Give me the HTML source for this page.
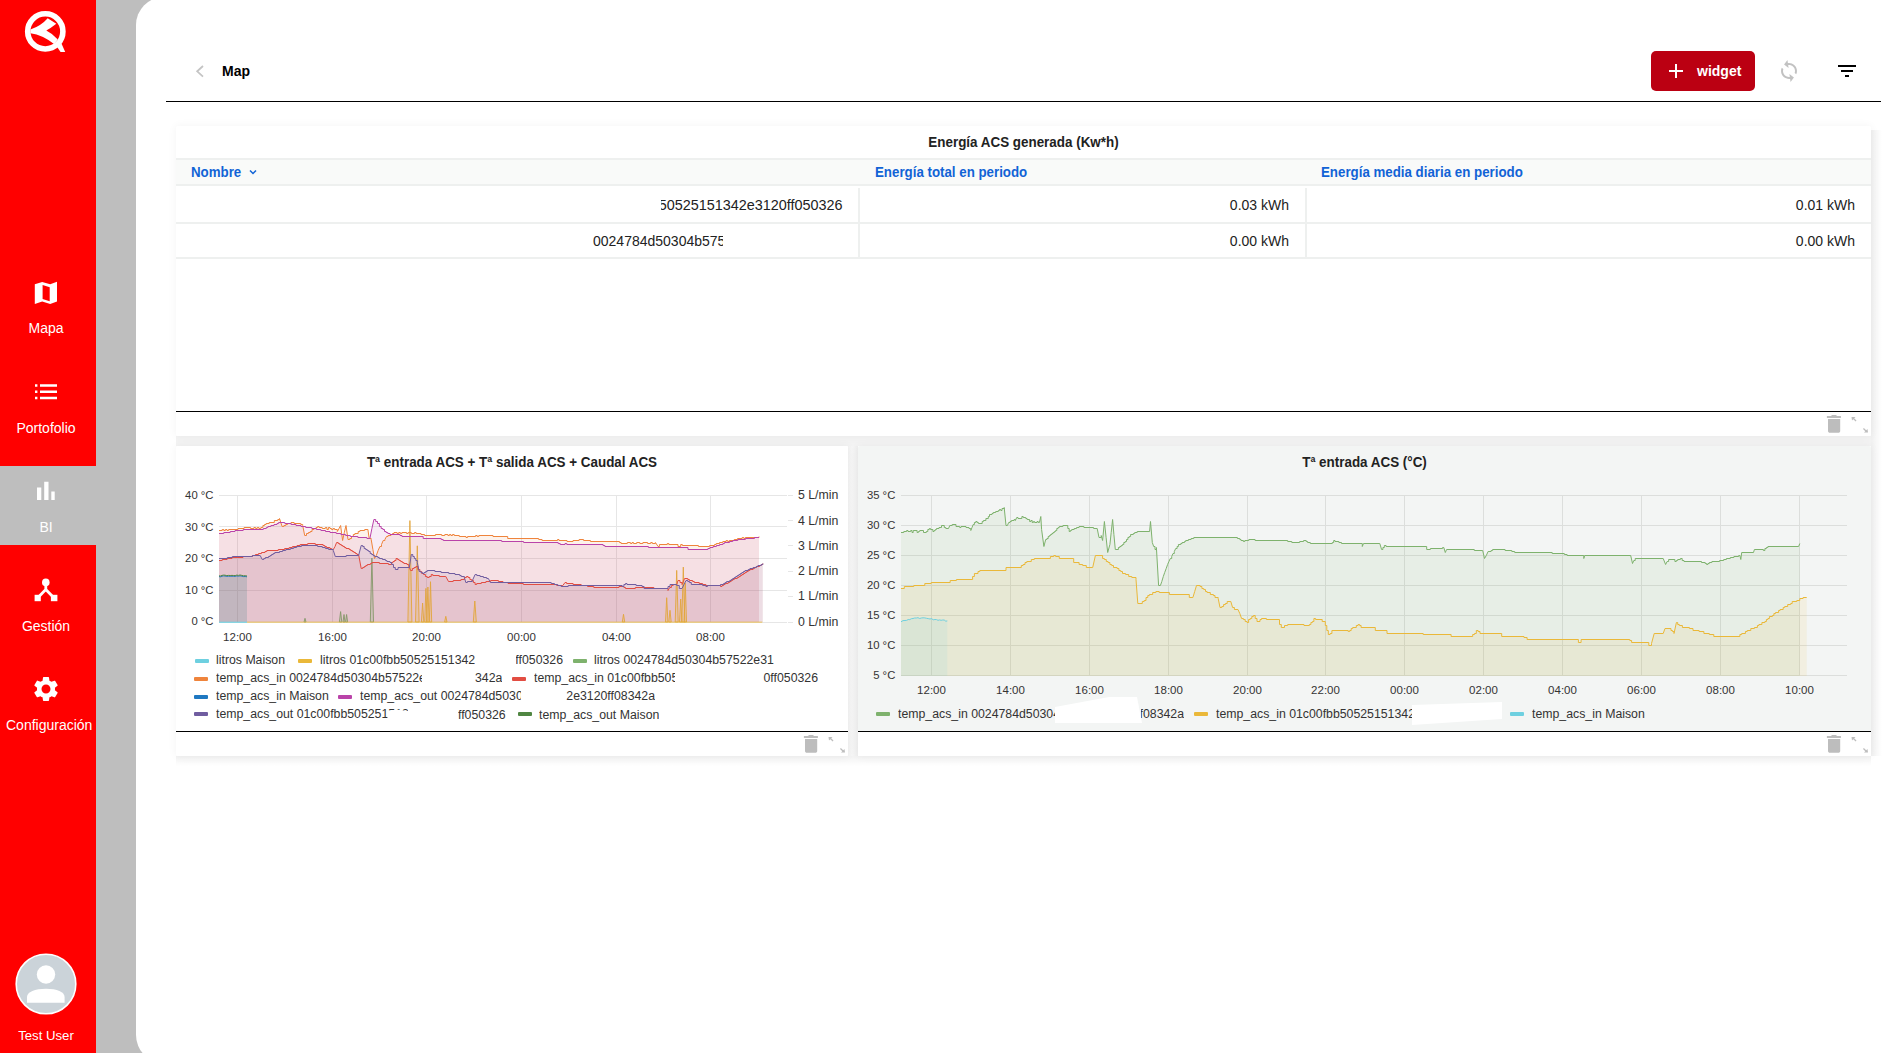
<!DOCTYPE html>
<html><head><meta charset="utf-8">
<style>
*{margin:0;padding:0;box-sizing:border-box}
html,body{width:1897px;height:1053px;overflow:hidden;background:#bebebe;font-family:"Liberation Sans",sans-serif;position:relative}
.abs{position:absolute}
#side{left:0;top:0;width:96px;height:1053px;background:#ff0000}
.nav{position:absolute;left:0;width:96px;color:#fff;font-size:13px;text-align:center}
.nav svg{position:absolute;left:34px;top:0}
.nav span{position:absolute;left:0;width:96px;white-space:nowrap}
#main{left:136px;top:-3px;width:1761px;height:1066px;background:#fff;border-radius:28px 0 0 28px}
.w{position:absolute;background:#fff;box-shadow:0 0 10px rgba(0,0,0,0.05);border-radius:2px}
.t{position:absolute;white-space:nowrap}
.blue{color:#1163d6;font-weight:bold;font-size:14px;transform:scaleX(0.95);transform-origin:0 0}
.cell{font-size:14px;color:#222}
.hl{position:absolute;background:#eef0ef}
.foot{position:absolute;left:0;right:0;height:24px;background:#fff}
.bline{position:absolute;left:0;right:0;height:1px;background:#000}
.ax{font-size:12px;color:#333;position:absolute;white-space:nowrap}
.lg{font-size:12.3px;color:#333;position:absolute;white-space:nowrap;overflow:hidden}
.nvt{left:-2px;width:96px;text-align:center;color:#fff;font-size:14px}
.sw{position:absolute;width:14px;height:4px;border-radius:1px}
</style></head><body>
<div id="side" class="abs">
  <svg class="abs" style="left:15px;top:5px" width="65" height="55" viewBox="0 0 65 55">
    <circle cx="30.3" cy="26.4" r="17.6" fill="none" stroke="#fff" stroke-width="5.6"/>
    <path d="M15.4 24.6 Q26 21 32.7 13.3 L41.3 18.8 Q36 23 31.3 25.6 Q38 29 42.8 34.5 L39 39 Q28 30 15.4 28.2 Z" fill="#fff"/>
    <path d="M41.8 41.5 L46.5 38.5 L50.2 46.9 L45.6 46.9 Z" fill="#fff"/>
  </svg>
  <svg class="abs" style="left:20px;top:275px" width="50" height="40" viewBox="0 0 50 40"><path fill="#fff" fill-rule="evenodd" d="M14.8 9.3 L22.2 7.1 L30.2 9.3 L37 6.8 L37 26.5 L30.2 29 L22.2 26.5 L14.8 29 Z M22.6 10 L29.7 12.3 L29.7 26.2 L22.6 23.9 Z"/></svg>
  <span class="t nvt" style="top:320px">Mapa</span>
  <svg class="abs" style="left:34px;top:383px" width="24" height="18" viewBox="0 0 24 18"><path fill="#fff" d="M1 1.2h2.4v2.6H1zM1 7.4h2.4v2.6H1zM1 13.7h2.4v2.6H1zM6 1.2h17v2.6H6zM6 7.4h17v2.6H6zM6 13.7h17v2.6H6z"/></svg>
  <span class="t nvt" style="top:420px">Portofolio</span>
  <div class="abs" style="left:0;top:466px;width:96px;height:79px;background:#bebebe"></div>
  <svg class="abs" style="left:34px;top:479px" width="24" height="24" viewBox="0 0 24 24"><path fill="#fff" d="M3 8.5h4.3V21H3zM10.2 2.8h4.3V21h-4.3zM17.3 12.5h3.4V21h-3.4z"/></svg>
  <span class="t nvt" style="top:519px">BI</span>
  <svg class="abs" style="left:30px;top:575px" width="32" height="30" viewBox="0 0 32 30"><circle cx="15.8" cy="7.4" r="3.8" fill="#fff"/><path d="M15.8 9 V14.5 L9.5 21 M15.8 14.5 L22.1 21" stroke="#fff" stroke-width="2.8" fill="none"/><rect x="4.6" y="19.8" width="6.2" height="6.4" fill="#fff"/><rect x="20.9" y="19.8" width="6.5" height="6.4" fill="#fff"/></svg>
  <span class="t nvt" style="top:618px">Gestión</span>
  <svg class="abs" style="left:31px;top:674px" width="30" height="30" viewBox="0 0 24 24"><path fill="#fff" d="M19.14 12.94c.04-.3.06-.61.06-.94 0-.32-.02-.64-.07-.94l2.03-1.58c.18-.14.23-.41.12-.61l-1.92-3.32c-.12-.22-.37-.29-.59-.22l-2.39.96c-.5-.38-1.03-.7-1.62-.94l-.36-2.54c-.04-.24-.24-.41-.48-.41h-3.840c-.24 0-.43.17-.47.41l-.36 2.54c-.59.24-1.13.57-1.62.94l-2.39-.96c-.22-.08-.47 0-.59.22L2.74 8.87c-.12.21-.08.47.12.61l2.03 1.58c-.05.3-.09.63-.09.94s.02.64.07.94l-2.03 1.58c-.18.14-.23.41-.12.61l1.92 3.32c.12.22.37.29.59.22l2.39-.96c.5.38 1.03.7 1.62.94l.36 2.54c.05.24.24.41.48.41h3.84c.24 0 .44-.17.47-.41l.36-2.54c.59-.24 1.13-.56 1.62-.94l2.39.96c.22.08.47 0 .59-.22l1.92-3.32c.12-.22.07-.47-.12-.61l-2.01-1.58zM12 15.6c-1.98 0-3.6-1.62-3.6-3.6s1.62-3.6 3.6-3.6 3.6 1.62 3.6 3.6-1.62 3.6-3.6 3.6z"/></svg>
  <span class="t nvt" style="top:717px;left:6px;width:auto;text-align:left">Configuración</span>
  <svg class="abs" style="left:15px;top:953px" width="62" height="62" viewBox="0 0 62 62">
    <circle cx="31" cy="31" r="29.8" fill="#cbd3d9" stroke="#fff" stroke-width="1.6"/>
    <circle cx="31" cy="21.5" r="9.2" fill="#fff"/>
    <path d="M12 49.7 V44 C12 39 20 35.8 31 35.8 C42 35.8 49.6 39 49.6 44 V49.7 Z" fill="#fff"/>
  </svg>
  <span class="t" style="left:-2px;width:96px;text-align:center;top:1028px;color:#fff;font-size:13.2px">Test User</span>
</div>

<div id="main" class="abs"></div>

<!-- header -->
<svg class="abs" style="left:193px;top:62px" width="14" height="18" viewBox="0 0 14 18"><path d="M10 4 L4.2 9.3 L10 14.6" stroke="#c4c4c4" stroke-width="1.8" fill="none"/></svg>
<span class="t" style="left:222px;top:63px;font-size:14px;font-weight:bold;color:#000">Map</span>
<div class="abs" style="left:1651px;top:51px;width:104px;height:40px;background:#bb0012;border-radius:5px"></div>
<svg class="abs" style="left:1667px;top:62px" width="18" height="18" viewBox="0 0 18 18"><path d="M9 2v14M2 9h14" stroke="#fff" stroke-width="2"/></svg>
<span class="t" style="left:1697px;top:63px;font-size:14px;font-weight:bold;color:#fff">widget</span>
<svg class="abs" style="left:1777px;top:59px" width="24" height="24" viewBox="0 0 24 24"><g transform="rotate(-8 12 12)"><path fill="#c2c2c2" d="M12 4V1L8 5l4 4V6c3.31 0 6 2.69 6 6 0 1.01-.25 1.97-.7 2.8l1.46 1.46C19.54 15.03 20 13.57 20 12c0-4.42-3.58-8-8-8zm0 14c-3.31 0-6-2.69-6-6 0-1.01.25-1.97.7-2.8L5.24 7.74C4.46 8.97 4 10.43 4 12c0 4.42 3.58 8 8 8v3l4-4-4-4v3z"/></g></svg>
<svg class="abs" style="left:1835px;top:59px" width="24" height="24" viewBox="0 0 24 24"><path fill="#000" d="M10 18h4v-2h-4v2zM3 6v2h18V6H3zm3 7h12v-2H6v2z" transform="translate(0,0)"/></svg>
<div class="abs" style="left:166px;top:101px;width:1715px;height:1px;background:#000"></div>

<!-- widget grey bands -->
<div class="abs" style="left:176px;top:436px;width:1695px;height:10px;background:#f3f3f3"></div>
<div class="abs" style="left:848px;top:446px;width:10px;height:310px;background:linear-gradient(to right,#f3f3f3,#f6f6f6 40%,#efefef)"></div>
<div class="abs" style="left:1871px;top:130px;width:11px;height:626px;background:linear-gradient(to right,rgba(0,0,0,0.06),rgba(0,0,0,0))"></div>
<div class="abs" style="left:176px;top:756px;width:1695px;height:10px;background:linear-gradient(to bottom,rgba(0,0,0,0.05),rgba(0,0,0,0))"></div>

<!-- TABLE WIDGET -->
<div class="w" style="left:176px;top:126px;width:1695px;height:310px">
  <span class="t" style="left:0;width:1695px;text-align:center;top:7.5px;font-size:14px;font-weight:bold;color:#222;transform:scaleX(0.958)">Energía ACS generada (Kw*h)</span>
  <div class="abs" style="left:0;top:32px;width:1695px;height:28px;background:#f9faf9;border-top:2px solid #eef0ef;border-bottom:2px solid #eef0ef"></div>
  <span class="t blue" style="left:15px;top:38px">Nombre</span>
  <svg class="abs" style="left:72px;top:41px" width="10" height="10" viewBox="0 0 10 10"><path d="M2 3.5 L5 6.5 L8 3.5" stroke="#1163d6" stroke-width="1.5" fill="none"/></svg>
  <span class="t blue" style="left:699px;top:38px">Energía total en periodo</span>
  <span class="t blue" style="left:1145px;top:38px">Energía media diaria en periodo</span>
  <div class="hl" style="left:0;top:96px;width:1695px;height:2px"></div>
  <div class="hl" style="left:0;top:131px;width:1695px;height:2px"></div>
  <div class="hl" style="left:682px;top:62px;width:2px;height:70px"></div>
  <div class="hl" style="left:1129px;top:62px;width:2px;height:70px"></div>
  <div class="t cell" style="left:485px;top:71px;width:181.5px;overflow:hidden;direction:rtl;font-size:14.4px">50525151342e3120ff050326</div>
  <div class="t cell" style="left:417px;top:107px;width:130px;overflow:hidden;text-align:left">0024784d50304b57522e</div>
  <span class="t cell" style="right:582px;top:71px">0.03 kWh</span>
  <span class="t cell" style="right:582px;top:107px">0.00 kWh</span>
  <span class="t cell" style="right:16px;top:71px">0.01 kWh</span>
  <span class="t cell" style="right:16px;top:107px">0.00 kWh</span>
  <div class="bline" style="top:285px"></div>
  <svg class="abs" style="left:1649px;top:288px" width="45" height="20" viewBox="0 0 45 20"><path fill="#bdbdbd" d="M1.9 2h14v1.9h-14zM6.5 1h5v1h-5zM3 5h12.2v12c0 1-.9 1.8-1.8 1.8h-8.6C3.9 18.8 3 18 3 17z"/><path fill="#bdbdbd" d="M26.5 3h4l-1.3 1.3 2.3 2.3-.9.9-2.3-2.3L27 6.5zM43 18.5h-4l1.3-1.3-2.3-2.3.9-.9 2.3 2.3 1.3-1.3z"/></svg>
</div>

<!-- LEFT CHART WIDGET -->
<div class="w" style="left:176px;top:446px;width:672px;height:310px">
  <span class="t" style="left:0;width:672px;text-align:center;top:7.5px;font-size:14px;font-weight:bold;color:#222;transform:scaleX(0.958)">Tª entrada ACS + Tª salida ACS + Caudal ACS</span>
  <div class="bline" style="top:285px"></div>
  <svg class="abs" style="left:626px;top:288px" width="45" height="20" viewBox="0 0 45 20"><path fill="#bdbdbd" d="M1.9 2h14v1.9h-14zM6.5 1h5v1h-5zM3 5h12.2v12c0 1-.9 1.8-1.8 1.8h-8.6C3.9 18.8 3 18 3 17z"/><path fill="#bdbdbd" d="M26.5 3h4l-1.3 1.3 2.3 2.3-.9.9-2.3-2.3L27 6.5zM43 18.5h-4l1.3-1.3-2.3-2.3.9-.9 2.3 2.3 1.3-1.3z"/></svg>
</div>
<!-- RIGHT CHART WIDGET -->
<div class="w" style="left:858px;top:446px;width:1013px;height:310px;background:#f3f5f4">
  <span class="t" style="left:0;width:1013px;text-align:center;top:7.5px;font-size:14px;font-weight:bold;color:#222;transform:scaleX(0.958)">Tª entrada ACS (°C)</span>
  <div class="foot" style="top:286px"></div>
  <div class="bline" style="top:285px"></div>
  <svg class="abs" style="left:967px;top:288px" width="45" height="20" viewBox="0 0 45 20"><path fill="#bdbdbd" d="M1.9 2h14v1.9h-14zM6.5 1h5v1h-5zM3 5h12.2v12c0 1-.9 1.8-1.8 1.8h-8.6C3.9 18.8 3 18 3 17z"/><path fill="#bdbdbd" d="M26.5 3h4l-1.3 1.3 2.3 2.3-.9.9-2.3-2.3L27 6.5zM43 18.5h-4l1.3-1.3-2.3-2.3.9-.9 2.3 2.3 1.3-1.3z"/></svg>
</div>

<!-- legends left -->
<div class="sw" style="left:195px;top:659px;background:#6ED0E0"></div><span class="lg" style="left:216px;top:653px">litros Maison</span>
<div class="sw" style="left:298px;top:659px;background:#EAB839"></div><span class="lg" style="left:320px;top:653px">litros 01c00fbb50525151342</span>
<span class="lg" style="left:516px;top:653px;width:47px;direction:rtl;text-align:left">ff050326</span>
<div class="sw" style="left:573px;top:659px;background:#7EB26D"></div><span class="lg" style="left:594px;top:653px">litros 0024784d50304b57522e31</span>

<div class="sw" style="left:194px;top:677px;background:#EF843C"></div><span class="lg" style="left:216px;top:671px;width:206px">temp_acs_in 0024784d50304b57522e31</span>
<span class="lg" style="left:475px;top:671px">342a</span>
<div class="sw" style="left:512px;top:677px;background:#E24D42"></div><span class="lg" style="left:534px;top:671px;width:141px">temp_acs_in 01c00fbb50525151342</span>
<span class="lg" style="left:763px;top:671px;width:55px;direction:rtl">0ff050326</span>

<div class="sw" style="left:194px;top:695px;background:#1F78C1"></div><span class="lg" style="left:216px;top:689px">temp_acs_in Maison</span>
<div class="sw" style="left:338px;top:695px;background:#BA43A9"></div><span class="lg" style="left:360px;top:689px;width:161px">temp_acs_out 0024784d50304b57</span>
<span class="lg" style="left:565px;top:689px;width:90px;direction:rtl">2e3120ff08342a</span>

<div class="sw" style="left:194px;top:712px;background:#705DA0"></div><span class="lg" style="left:216px;top:707px;width:192px">temp_acs_out 01c00fbb50525151342</span><svg class="abs" style="left:386px;top:705px" width="30" height="22"><path d="M1.5 5.5 L12 4.8 L22 6 L24 20 L1.5 20 Z" fill="#fff"/></svg>
<span class="lg" style="left:458px;top:707.5px">ff050326</span>
<div class="sw" style="left:518px;top:712px;background:#508642"></div><span class="lg" style="left:539px;top:707.5px">temp_acs_out Maison</span>

<!-- legends right -->
<div class="sw" style="left:876px;top:712px;background:#7EB26D"></div><span class="lg" style="left:898px;top:707px;width:157px">temp_acs_in 0024784d50304b57522e</span>
<span class="lg" style="left:1141px;top:707px;width:43px;direction:rtl">f08342a</span>
<svg class="abs" style="left:1050px;top:694px" width="100" height="32"><path d="M5 13 L59 3 L87 3 L92 29 L5 29 Z" fill="#fff"/></svg>
<div class="sw" style="left:1194px;top:712px;background:#EAB839"></div><span class="lg" style="left:1216px;top:707px;width:197px">temp_acs_in 01c00fbb50525151342e</span>
<svg class="abs" style="left:1410px;top:700px" width="95" height="28"><path d="M2 5 L92 2 L92 19 L2 25 Z" fill="#fff"/></svg>
<div class="sw" style="left:1510px;top:712px;background:#6ED0E0"></div><span class="lg" style="left:1532px;top:707px">temp_acs_in Maison</span>

<svg class="abs" style="left:0;top:0;pointer-events:none" width="1897" height="1053" viewBox="0 0 1897 1053">
<g stroke="#e6e6e6" stroke-width="1" shape-rendering="crispEdges">
<line x1="219" y1="495.5" x2="787" y2="495.5"/>
<line x1="219" y1="526.5" x2="787" y2="526.5"/>
<line x1="219" y1="558.5" x2="787" y2="558.5"/>
<line x1="219" y1="590.5" x2="787" y2="590.5"/>
<line x1="219" y1="622.5" x2="787" y2="622.5"/>
<line x1="237.5" y1="495" x2="237.5" y2="622"/>
<line x1="332.5" y1="495" x2="332.5" y2="622"/>
<line x1="426.5" y1="495" x2="426.5" y2="622"/>
<line x1="521.5" y1="495" x2="521.5" y2="622"/>
<line x1="616.5" y1="495" x2="616.5" y2="622"/>
<line x1="710.5" y1="495" x2="710.5" y2="622"/>
<line x1="788" y1="495.5" x2="793" y2="495.5"/>
<line x1="788" y1="520.5" x2="793" y2="520.5"/>
<line x1="788" y1="545.5" x2="793" y2="545.5"/>
<line x1="788" y1="571.5" x2="793" y2="571.5"/>
<line x1="788" y1="596.5" x2="793" y2="596.5"/>
<line x1="788" y1="622.5" x2="793" y2="622.5"/>
</g>
<polygon points="219.0,530.5 222.2,530.5 222.2,529.5 223.8,529.5 223.8,530.5 225.4,530.5 225.4,529.5 227.0,529.5 227.0,530.5 228.6,530.5 228.6,529.5 238.0,529.5 238.0,528.5 244.1,528.5 244.1,527.5 250.6,527.5 250.6,528.5 253.9,528.5 253.9,527.5 255.6,527.5 255.6,528.5 257.2,528.5 257.2,527.5 258.9,527.5 258.9,528.5 260.9,528.5 260.9,527.5 262.9,527.5 262.9,525.5 264.5,525.5 264.5,524.5 266.1,524.5 266.1,523.5 269.2,523.5 269.2,522.5 274.3,522.5 274.3,520.5 277.8,520.5 277.8,519.5 279.5,519.5 279.5,518.5 282.1,526.5 283.9,526.5 283.9,525.5 285.8,525.5 285.8,524.5 287.6,524.5 287.6,523.5 291.0,523.5 291.0,522.5 294.1,522.5 294.1,523.5 300.8,523.5 300.8,524.5 302.7,524.5 302.7,525.5 304.7,535.5 306.5,535.5 306.5,533.5 308.4,533.5 308.4,532.5 310.2,532.5 310.2,531.5 312.0,531.5 312.0,529.5 314.0,529.5 314.0,528.5 316.0,528.5 316.0,527.5 317.6,527.5 317.6,526.5 319.1,526.5 319.1,527.5 322.2,527.5 322.2,528.5 325.3,528.5 325.3,527.5 326.9,527.5 326.9,529.5 328.4,529.5 328.4,527.5 330.0,527.5 330.0,528.5 331.5,528.5 331.5,529.5 333.1,529.5 333.1,528.5 334.6,528.5 334.6,529.5 337.3,529.5 337.3,531.5 339.0,528.5 340.6,525.5 342.6,540.5 344.3,532.5 346.0,525.5 348.0,539.5 349.8,539.5 349.8,538.5 351.5,538.5 351.5,536.5 353.3,536.5 353.3,534.5 354.9,534.5 354.9,533.5 358.2,533.5 358.2,531.5 359.9,531.5 359.9,530.5 364.7,530.5 364.7,529.5 367.9,529.5 369.2,538.5 371.2,538.5 371.2,539.5 372.9,549.5 374.5,558.5 376.3,555.5 378.1,550.5 379.9,546.5 381.5,546.5 381.5,544.5 383.2,540.5 384.9,540.5 384.9,539.5 386.5,536.5 388.0,536.5 388.0,535.5 391.0,535.5 391.0,534.5 392.5,534.5 392.5,533.5 394.0,533.5 394.0,532.5 397.1,532.5 397.1,533.5 398.7,533.5 398.7,532.5 400.3,532.5 400.3,533.5 401.9,533.5 401.9,532.5 406.6,532.5 406.6,533.5 408.2,533.5 408.2,532.5 411.3,532.5 411.3,533.5 414.5,533.5 414.5,532.5 416.1,532.5 416.1,533.5 421.0,533.5 421.0,534.5 424.6,534.5 424.6,535.5 435.4,535.5 435.4,534.5 441.7,534.5 441.7,535.5 444.8,535.5 444.8,534.5 447.9,534.5 447.9,535.5 449.4,535.5 449.4,534.5 450.9,534.5 450.9,535.5 452.5,535.5 452.5,534.5 454.2,534.5 454.2,535.5 459.3,535.5 459.3,536.5 466.0,536.5 466.0,537.5 467.6,537.5 467.6,536.5 475.6,536.5 475.6,535.5 477.2,535.5 477.2,536.5 478.8,536.5 478.8,535.5 493.0,535.5 493.0,536.5 507.7,536.5 507.7,538.5 538.7,538.5 538.7,539.5 542.1,539.5 542.1,540.5 557.5,540.5 557.5,539.5 559.0,539.5 559.0,540.5 567.0,540.5 567.0,541.5 573.0,541.5 573.0,540.5 579.1,540.5 579.1,539.5 583.6,539.5 583.6,540.5 590.4,540.5 590.4,541.5 619.5,541.5 619.5,542.5 621.1,542.5 621.1,543.5 627.3,543.5 627.3,542.5 630.4,542.5 630.4,543.5 632.0,543.5 632.0,542.5 633.5,542.5 633.5,543.5 636.7,543.5 636.7,542.5 639.8,542.5 639.8,543.5 642.9,543.5 642.9,542.5 647.6,542.5 647.6,543.5 650.7,543.5 650.7,542.5 652.3,542.5 652.3,543.5 655.4,543.5 655.4,542.5 658.1,546.5 659.4,546.5 659.4,544.5 667.3,544.5 667.3,543.5 668.8,543.5 668.8,544.5 678.0,544.5 678.0,546.5 680.7,546.5 680.7,544.5 682.3,544.5 682.3,545.5 698.4,545.5 698.4,546.5 709.6,546.5 709.6,545.5 714.5,545.5 714.5,544.5 716.2,544.5 716.2,543.5 719.5,543.5 719.5,542.5 722.8,542.5 722.8,541.5 726.1,541.5 726.1,540.5 727.7,540.5 727.7,541.5 729.3,541.5 729.3,540.5 734.2,540.5 734.2,539.5 737.5,539.5 737.5,538.5 742.2,538.5 742.2,537.5 743.8,537.5 743.8,538.5 745.3,538.5 745.3,537.5 759.0,537.5 759.0,536.5 759.0,622 219.0,622" fill="#EF843C" fill-opacity="0.1"/>
<polygon points="219.0,560.5 222.2,560.5 222.2,559.5 227.1,559.5 227.1,558.5 232.0,558.5 232.0,557.5 243.0,557.5 243.0,556.5 252.4,556.5 252.4,555.5 255.4,555.5 255.4,554.5 258.5,554.5 258.5,553.5 261.5,553.5 261.5,552.5 265.0,552.5 265.0,551.5 266.8,551.5 266.8,550.5 278.2,550.5 278.2,549.5 284.6,549.5 284.6,548.5 289.2,548.5 289.2,547.5 292.4,547.5 292.4,546.5 297.0,546.5 297.0,545.5 300.1,545.5 300.1,544.5 307.7,544.5 307.7,543.5 315.3,543.5 315.3,544.5 323.1,544.5 323.1,545.5 324.8,545.5 324.8,546.5 326.5,546.5 326.5,547.5 329.9,547.5 329.9,548.5 331.6,548.5 331.6,549.5 333.3,549.5 335.0,546.5 336.6,542.5 338.2,542.5 338.2,543.5 339.7,543.5 339.7,544.5 341.3,544.5 341.3,545.5 342.9,545.5 342.9,546.5 344.5,546.5 344.5,547.5 346.0,547.5 346.0,548.5 349.2,548.5 349.2,549.5 350.7,549.5 350.7,550.5 352.3,550.5 352.3,551.5 353.9,551.5 353.9,552.5 355.5,552.5 355.5,553.5 357.0,553.5 357.0,554.5 358.6,554.5 361.2,568.5 362.7,568.5 362.7,567.5 364.3,567.5 364.3,566.5 365.8,566.5 365.8,565.5 367.3,565.5 367.3,564.5 370.4,564.5 370.4,563.5 371.9,563.5 371.9,562.5 379.4,562.5 379.4,563.5 388.5,563.5 388.5,564.5 391.5,564.5 391.5,562.5 393.0,562.5 393.0,561.5 394.5,561.5 394.5,560.5 396.0,560.5 396.0,558.5 397.6,558.5 397.6,559.5 399.1,559.5 399.1,560.5 400.7,560.5 400.7,561.5 402.3,561.5 402.3,562.5 403.9,562.5 403.9,563.5 407.0,563.5 407.0,564.5 408.6,564.5 408.6,565.5 410.6,570.5 412.4,570.5 412.4,568.5 414.1,568.5 414.1,567.5 415.9,567.5 415.9,566.5 417.9,566.5 417.9,569.5 419.9,569.5 419.9,571.5 421.7,571.5 421.7,573.5 423.5,573.5 423.5,574.5 425.4,574.5 425.4,576.5 427.2,576.5 427.2,577.5 429.2,577.5 429.2,576.5 431.2,576.5 431.2,574.5 432.8,574.5 432.8,575.5 439.3,575.5 439.3,576.5 445.8,576.5 448.5,581.5 453.2,581.5 453.2,580.5 460.9,580.5 460.9,579.5 464.4,579.5 464.4,577.5 466.4,577.5 466.4,576.5 468.1,576.5 468.1,577.5 469.9,577.5 469.9,579.5 471.6,579.5 471.6,580.5 473.4,580.5 473.4,582.5 475.1,582.5 475.1,584.5 476.7,584.5 476.7,583.5 481.3,583.5 481.3,582.5 485.9,582.5 485.9,581.5 490.6,581.5 490.6,580.5 498.4,580.5 498.4,581.5 503.0,581.5 503.0,582.5 508.0,582.5 508.0,583.5 523.3,583.5 523.3,584.5 556.7,584.5 556.7,585.5 562.8,585.5 565.0,582.5 566.6,582.5 566.6,583.5 573.1,583.5 573.1,584.5 581.2,584.5 581.2,585.5 587.5,585.5 587.5,586.5 593.8,586.5 593.8,587.5 619.0,587.5 619.0,586.5 623.9,586.5 623.9,587.5 625.5,587.5 625.5,588.5 635.3,588.5 635.3,587.5 653.9,587.5 653.9,588.5 668.0,588.5 668.0,590.5 669.7,587.5 671.4,587.5 671.4,585.5 673.2,585.5 673.2,584.5 676.7,584.5 678.0,580.5 680.0,580.5 680.0,582.5 682.0,582.5 682.0,584.5 684.6,578.5 687.8,578.5 687.8,579.5 689.4,579.5 689.4,580.5 692.6,580.5 692.6,581.5 694.3,581.5 694.3,582.5 699.2,582.5 699.2,583.5 702.6,583.5 702.6,584.5 705.9,584.5 705.9,585.5 720.5,585.5 720.5,586.5 722.0,586.5 722.0,585.5 723.6,585.5 723.6,584.5 725.1,584.5 725.1,583.5 728.1,583.5 728.1,582.5 729.7,582.5 729.7,581.5 731.2,581.5 731.2,580.5 732.7,580.5 732.7,579.5 734.3,579.5 734.3,578.5 737.3,578.5 737.3,577.5 738.9,577.5 738.9,576.5 740.4,576.5 740.4,575.5 741.9,575.5 741.9,574.5 743.5,574.5 743.5,573.5 745.0,573.5 745.0,572.5 746.6,572.5 746.6,571.5 748.2,571.5 748.2,570.5 749.9,570.5 749.9,569.5 753.1,569.5 753.1,568.5 754.7,568.5 754.7,567.5 756.3,567.5 756.3,566.5 759.6,566.5 759.6,565.5 761.2,565.5 761.2,564.5 762.8,564.5 762.8,563.5 762.8,622 219.0,622" fill="#E24D42" fill-opacity="0.1"/>
<polygon points="219.0,533.5 223.8,533.5 223.8,532.5 230.2,532.5 230.2,531.5 235.0,531.5 235.0,530.5 243.2,530.5 243.2,529.5 263.3,529.5 263.3,528.5 266.3,528.5 266.3,527.5 267.9,527.5 267.9,526.5 270.9,526.5 270.9,525.5 274.0,525.5 274.0,524.5 277.0,524.5 277.0,523.5 278.6,523.5 278.6,522.5 284.8,522.5 284.8,523.5 291.1,523.5 291.1,524.5 296.0,524.5 296.0,525.5 301.0,525.5 301.0,526.5 305.7,526.5 305.7,527.5 311.8,527.5 311.8,528.5 316.4,528.5 316.4,529.5 320.9,529.5 320.9,530.5 325.5,530.5 325.5,531.5 330.0,531.5 330.0,532.5 336.2,532.5 336.2,533.5 340.9,533.5 340.9,534.5 345.6,534.5 345.6,535.5 350.3,535.5 350.3,536.5 357.9,536.5 357.9,537.5 366.9,537.5 366.9,538.5 369.9,538.5 371.9,528.5 373.9,519.5 375.7,519.5 375.7,521.5 377.5,521.5 377.5,523.5 379.4,523.5 379.4,526.5 381.2,526.5 381.2,528.5 382.9,528.5 382.9,529.5 384.5,529.5 384.5,531.5 386.1,531.5 386.1,532.5 387.8,532.5 387.8,533.5 390.0,533.5 390.0,534.5 400.0,534.5 400.0,535.5 402.0,535.5 402.0,536.5 423.2,536.5 423.2,538.5 441.2,538.5 441.2,539.5 443.2,539.5 443.2,540.5 501.7,540.5 501.7,541.5 523.6,541.5 523.6,542.5 558.2,542.5 558.2,543.5 560.2,543.5 560.2,544.5 565.0,544.5 565.0,543.5 566.8,543.5 566.8,544.5 603.1,544.5 603.1,545.5 604.9,545.5 604.9,546.5 648.4,546.5 648.4,547.5 688.0,547.5 688.0,549.5 707.9,549.5 707.9,548.5 709.9,548.5 709.9,547.5 713.1,547.5 713.1,546.5 716.4,546.5 716.4,545.5 719.6,545.5 719.6,544.5 722.9,544.5 722.9,543.5 724.5,543.5 724.5,542.5 729.5,542.5 729.5,541.5 732.8,541.5 732.8,540.5 737.8,540.5 737.8,539.5 745.4,539.5 745.4,538.5 754.5,538.5 754.5,537.5 759.0,537.5 759.0,622 219.0,622" fill="#BA43A9" fill-opacity="0.1"/>
<polygon points="219.0,558.5 227.3,558.5 227.3,557.5 232.3,557.5 232.3,556.5 252.4,556.5 252.4,555.5 260.2,555.5 262.2,559.5 263.8,559.5 263.8,558.5 265.4,558.5 265.4,557.5 268.5,557.5 268.5,556.5 270.1,556.5 270.1,555.5 271.6,555.5 271.6,554.5 273.2,554.5 273.2,553.5 274.8,553.5 274.8,552.5 279.5,552.5 279.5,551.5 282.6,551.5 282.6,550.5 285.8,550.5 285.8,549.5 290.4,549.5 290.4,548.5 293.6,548.5 293.6,547.5 296.7,547.5 296.7,546.5 301.4,546.5 301.4,545.5 317.6,545.5 317.6,546.5 322.3,546.5 322.3,547.5 325.4,547.5 325.4,548.5 328.6,548.5 328.6,549.5 333.3,549.5 333.3,550.5 335.3,556.5 346.2,556.5 346.2,555.5 358.6,555.5 361.2,545.5 362.7,545.5 362.7,546.5 364.2,546.5 364.2,548.5 365.7,548.5 365.7,549.5 367.2,549.5 367.2,550.5 368.7,550.5 368.7,551.5 370.2,551.5 370.2,553.5 371.7,553.5 371.7,554.5 373.2,554.5 373.2,555.5 374.7,555.5 374.7,556.5 377.8,556.5 377.8,557.5 379.3,557.5 379.3,558.5 382.4,558.5 382.4,559.5 385.4,559.5 385.4,560.5 386.9,560.5 386.9,561.5 390.0,561.5 390.0,562.5 391.8,562.5 391.8,564.5 393.5,564.5 393.5,567.5 395.3,567.5 395.3,569.5 398.0,569.5 398.0,567.5 409.3,567.5 411.3,554.5 412.8,554.5 412.8,556.5 414.3,556.5 414.3,558.5 415.8,558.5 415.8,560.5 417.3,560.5 417.3,562.5 419.2,571.5 420.9,571.5 420.9,572.5 422.6,572.5 422.6,573.5 424.1,573.5 424.1,572.5 425.7,572.5 425.7,571.5 427.2,571.5 427.2,570.5 434.9,570.5 434.9,571.5 441.1,571.5 441.1,572.5 448.8,572.5 448.8,573.5 455.0,573.5 455.0,574.5 459.7,574.5 459.7,575.5 461.2,575.5 461.2,576.5 464.4,576.5 464.4,577.5 465.8,582.5 467.4,582.5 467.4,581.5 472.4,581.5 472.4,580.5 475.1,574.5 476.8,574.5 476.8,575.5 480.1,575.5 480.1,576.5 483.4,576.5 483.4,577.5 486.7,577.5 486.7,578.5 488.4,578.5 490.4,582.5 551.2,582.5 551.2,583.5 554.5,583.5 554.5,584.5 557.8,584.5 557.8,585.5 561.1,585.5 561.1,586.5 568.2,586.5 568.2,585.5 622.2,585.5 622.2,586.5 623.9,586.5 623.9,584.5 625.5,584.5 625.5,583.5 627.0,583.5 627.0,584.5 636.1,584.5 636.1,585.5 642.1,585.5 642.1,586.5 644.1,586.5 644.1,588.5 668.0,588.5 668.0,586.5 670.0,586.5 670.0,584.5 676.7,584.5 676.7,585.5 679.3,585.5 679.3,588.5 682.0,588.5 684.0,584.5 686.0,580.5 687.8,580.5 687.8,581.5 689.5,581.5 689.5,582.5 691.3,582.5 691.3,584.5 702.6,584.5 702.6,585.5 705.9,585.5 705.9,586.5 707.5,586.5 707.5,585.5 720.5,585.5 720.5,584.5 723.6,584.5 723.6,583.5 725.1,583.5 725.1,582.5 726.6,582.5 726.6,581.5 729.7,581.5 729.7,580.5 731.2,580.5 731.2,579.5 732.7,579.5 732.7,578.5 734.3,578.5 734.3,577.5 735.8,577.5 735.8,576.5 737.3,576.5 737.3,575.5 738.9,575.5 738.9,574.5 740.4,574.5 740.4,573.5 741.9,573.5 741.9,572.5 743.5,572.5 743.5,571.5 745.0,571.5 745.0,570.5 748.2,570.5 748.2,569.5 749.9,569.5 749.9,568.5 753.1,568.5 753.1,567.5 756.3,567.5 756.3,566.5 757.9,566.5 757.9,565.5 761.2,565.5 761.2,564.5 762.8,564.5 762.8,563.5 762.8,622 219.0,622" fill="#705DA0" fill-opacity="0.1"/>
<polygon points="219.0,576.6 220.5,576.8 222.0,576.2 223.5,575.9 225.0,576.0 226.8,576.4 228.5,576.2 230.2,576.3 232.0,576.2 233.6,576.3 235.2,576.4 236.8,575.9 238.4,576.2 240.0,575.8 241.8,576.2 243.5,576.6 245.2,576.5 247.0,576.8 247.0,622 219.0,622" fill="#1F78C1" fill-opacity="0.1"/>
<polygon points="219.0,576.6 220.5,576.8 222.0,576.2 223.5,575.9 225.0,576.0 226.8,576.4 228.5,576.2 230.2,576.3 232.0,576.2 233.6,576.3 235.2,576.4 236.8,575.9 238.4,576.2 240.0,575.8 241.8,576.2 243.5,576.6 245.2,576.5 247.0,576.8 247.0,622 219.0,622" fill="#508642" fill-opacity="0.1"/>
<polygon points="407.9,622.0 409.9,520.6 411.9,622.0" fill="#EAB839" fill-opacity="0.2" stroke="#e2a53c" stroke-width="0.9" stroke-linejoin="miter" stroke-miterlimit="20"/>
<polygon points="415.5,622.0 417.3,545.8 419.1,622.0" fill="#EAB839" fill-opacity="0.2" stroke="#e2a53c" stroke-width="0.9" stroke-linejoin="miter" stroke-miterlimit="20"/>
<polygon points="421.4,622.0 422.6,603.0 423.8,622.0" fill="#EAB839" fill-opacity="0.2" stroke="#e2a53c" stroke-width="0.9" stroke-linejoin="miter" stroke-miterlimit="20"/>
<polygon points="424.7,622.0 425.9,588.4 427.1,622.0" fill="#EAB839" fill-opacity="0.2" stroke="#e2a53c" stroke-width="0.9" stroke-linejoin="miter" stroke-miterlimit="20"/>
<polygon points="426.7,622.0 427.9,587.0 429.1,622.0" fill="#EAB839" fill-opacity="0.2" stroke="#e2a53c" stroke-width="0.9" stroke-linejoin="miter" stroke-miterlimit="20"/>
<polygon points="429.3,622.0 430.5,581.7 431.7,622.0" fill="#EAB839" fill-opacity="0.2" stroke="#e2a53c" stroke-width="0.9" stroke-linejoin="miter" stroke-miterlimit="20"/>
<polygon points="444.6,622.0 445.8,616.3 447.0,622.0" fill="#EAB839" fill-opacity="0.2" stroke="#e2a53c" stroke-width="0.9" stroke-linejoin="miter" stroke-miterlimit="20"/>
<polygon points="473.3,622.0 474.8,601.0 476.3,622.0" fill="#EAB839" fill-opacity="0.2" stroke="#e2a53c" stroke-width="0.9" stroke-linejoin="miter" stroke-miterlimit="20"/>
<polygon points="622.3,622.0 623.5,614.3 624.7,622.0" fill="#EAB839" fill-opacity="0.2" stroke="#e2a53c" stroke-width="0.9" stroke-linejoin="miter" stroke-miterlimit="20"/>
<polygon points="665.5,622.0 666.7,597.7 667.9,622.0" fill="#EAB839" fill-opacity="0.2" stroke="#e2a53c" stroke-width="0.9" stroke-linejoin="miter" stroke-miterlimit="20"/>
<polygon points="668.8,622.0 670.0,610.3 671.2,622.0" fill="#EAB839" fill-opacity="0.2" stroke="#e2a53c" stroke-width="0.9" stroke-linejoin="miter" stroke-miterlimit="20"/>
<polygon points="675.2,622.0 676.7,570.4 678.2,622.0" fill="#EAB839" fill-opacity="0.2" stroke="#e2a53c" stroke-width="0.9" stroke-linejoin="miter" stroke-miterlimit="20"/>
<polygon points="679.5,622.0 680.7,599.0 681.9,622.0" fill="#EAB839" fill-opacity="0.2" stroke="#e2a53c" stroke-width="0.9" stroke-linejoin="miter" stroke-miterlimit="20"/>
<polygon points="681.8,622.0 683.3,567.1 684.8,622.0" fill="#EAB839" fill-opacity="0.2" stroke="#e2a53c" stroke-width="0.9" stroke-linejoin="miter" stroke-miterlimit="20"/>
<polygon points="684.1,622.0 685.3,583.0 686.5,622.0" fill="#EAB839" fill-opacity="0.2" stroke="#e2a53c" stroke-width="0.9" stroke-linejoin="miter" stroke-miterlimit="20"/>
<polygon points="304.0,622.0 305.0,618.3 306.0,622.0" fill="#7EB26D" fill-opacity="0.2" stroke="#86976a" stroke-width="0.9" stroke-linejoin="miter" stroke-miterlimit="20"/>
<polygon points="339.4,622.0 340.6,611.6 341.8,622.0" fill="#7EB26D" fill-opacity="0.2" stroke="#86976a" stroke-width="0.9" stroke-linejoin="miter" stroke-miterlimit="20"/>
<polygon points="343.0,622.0 344.0,614.5 345.0,622.0" fill="#7EB26D" fill-opacity="0.2" stroke="#86976a" stroke-width="0.9" stroke-linejoin="miter" stroke-miterlimit="20"/>
<polygon points="345.6,622.0 346.6,614.5 347.6,622.0" fill="#7EB26D" fill-opacity="0.2" stroke="#86976a" stroke-width="0.9" stroke-linejoin="miter" stroke-miterlimit="20"/>
<polygon points="370.3,622.0 371.9,558.0 373.5,622.0" fill="#7EB26D" fill-opacity="0.2" stroke="#86976a" stroke-width="0.9" stroke-linejoin="miter" stroke-miterlimit="20"/>
<polyline points="219.0,530.5 222.2,530.5 222.2,529.5 223.8,529.5 223.8,530.5 225.4,530.5 225.4,529.5 227.0,529.5 227.0,530.5 228.6,530.5 228.6,529.5 238.0,529.5 238.0,528.5 244.1,528.5 244.1,527.5 250.6,527.5 250.6,528.5 253.9,528.5 253.9,527.5 255.6,527.5 255.6,528.5 257.2,528.5 257.2,527.5 258.9,527.5 258.9,528.5 260.9,528.5 260.9,527.5 262.9,527.5 262.9,525.5 264.5,525.5 264.5,524.5 266.1,524.5 266.1,523.5 269.2,523.5 269.2,522.5 274.3,522.5 274.3,520.5 277.8,520.5 277.8,519.5 279.5,519.5 279.5,518.5 282.1,526.5 283.9,526.5 283.9,525.5 285.8,525.5 285.8,524.5 287.6,524.5 287.6,523.5 291.0,523.5 291.0,522.5 294.1,522.5 294.1,523.5 300.8,523.5 300.8,524.5 302.7,524.5 302.7,525.5 304.7,535.5 306.5,535.5 306.5,533.5 308.4,533.5 308.4,532.5 310.2,532.5 310.2,531.5 312.0,531.5 312.0,529.5 314.0,529.5 314.0,528.5 316.0,528.5 316.0,527.5 317.6,527.5 317.6,526.5 319.1,526.5 319.1,527.5 322.2,527.5 322.2,528.5 325.3,528.5 325.3,527.5 326.9,527.5 326.9,529.5 328.4,529.5 328.4,527.5 330.0,527.5 330.0,528.5 331.5,528.5 331.5,529.5 333.1,529.5 333.1,528.5 334.6,528.5 334.6,529.5 337.3,529.5 337.3,531.5 339.0,528.5 340.6,525.5 342.6,540.5 344.3,532.5 346.0,525.5 348.0,539.5 349.8,539.5 349.8,538.5 351.5,538.5 351.5,536.5 353.3,536.5 353.3,534.5 354.9,534.5 354.9,533.5 358.2,533.5 358.2,531.5 359.9,531.5 359.9,530.5 364.7,530.5 364.7,529.5 367.9,529.5 369.2,538.5 371.2,538.5 371.2,539.5 372.9,549.5 374.5,558.5 376.3,555.5 378.1,550.5 379.9,546.5 381.5,546.5 381.5,544.5 383.2,540.5 384.9,540.5 384.9,539.5 386.5,536.5 388.0,536.5 388.0,535.5 391.0,535.5 391.0,534.5 392.5,534.5 392.5,533.5 394.0,533.5 394.0,532.5 397.1,532.5 397.1,533.5 398.7,533.5 398.7,532.5 400.3,532.5 400.3,533.5 401.9,533.5 401.9,532.5 406.6,532.5 406.6,533.5 408.2,533.5 408.2,532.5 411.3,532.5 411.3,533.5 414.5,533.5 414.5,532.5 416.1,532.5 416.1,533.5 421.0,533.5 421.0,534.5 424.6,534.5 424.6,535.5 435.4,535.5 435.4,534.5 441.7,534.5 441.7,535.5 444.8,535.5 444.8,534.5 447.9,534.5 447.9,535.5 449.4,535.5 449.4,534.5 450.9,534.5 450.9,535.5 452.5,535.5 452.5,534.5 454.2,534.5 454.2,535.5 459.3,535.5 459.3,536.5 466.0,536.5 466.0,537.5 467.6,537.5 467.6,536.5 475.6,536.5 475.6,535.5 477.2,535.5 477.2,536.5 478.8,536.5 478.8,535.5 493.0,535.5 493.0,536.5 507.7,536.5 507.7,538.5 538.7,538.5 538.7,539.5 542.1,539.5 542.1,540.5 557.5,540.5 557.5,539.5 559.0,539.5 559.0,540.5 567.0,540.5 567.0,541.5 573.0,541.5 573.0,540.5 579.1,540.5 579.1,539.5 583.6,539.5 583.6,540.5 590.4,540.5 590.4,541.5 619.5,541.5 619.5,542.5 621.1,542.5 621.1,543.5 627.3,543.5 627.3,542.5 630.4,542.5 630.4,543.5 632.0,543.5 632.0,542.5 633.5,542.5 633.5,543.5 636.7,543.5 636.7,542.5 639.8,542.5 639.8,543.5 642.9,543.5 642.9,542.5 647.6,542.5 647.6,543.5 650.7,543.5 650.7,542.5 652.3,542.5 652.3,543.5 655.4,543.5 655.4,542.5 658.1,546.5 659.4,546.5 659.4,544.5 667.3,544.5 667.3,543.5 668.8,543.5 668.8,544.5 678.0,544.5 678.0,546.5 680.7,546.5 680.7,544.5 682.3,544.5 682.3,545.5 698.4,545.5 698.4,546.5 709.6,546.5 709.6,545.5 714.5,545.5 714.5,544.5 716.2,544.5 716.2,543.5 719.5,543.5 719.5,542.5 722.8,542.5 722.8,541.5 726.1,541.5 726.1,540.5 727.7,540.5 727.7,541.5 729.3,541.5 729.3,540.5 734.2,540.5 734.2,539.5 737.5,539.5 737.5,538.5 742.2,538.5 742.2,537.5 743.8,537.5 743.8,538.5 745.3,538.5 745.3,537.5 759.0,537.5 759.0,536.5" fill="none" stroke="#EF843C" stroke-width="1" stroke-linejoin="round"/>
<polyline points="219.0,560.5 222.2,560.5 222.2,559.5 227.1,559.5 227.1,558.5 232.0,558.5 232.0,557.5 243.0,557.5 243.0,556.5 252.4,556.5 252.4,555.5 255.4,555.5 255.4,554.5 258.5,554.5 258.5,553.5 261.5,553.5 261.5,552.5 265.0,552.5 265.0,551.5 266.8,551.5 266.8,550.5 278.2,550.5 278.2,549.5 284.6,549.5 284.6,548.5 289.2,548.5 289.2,547.5 292.4,547.5 292.4,546.5 297.0,546.5 297.0,545.5 300.1,545.5 300.1,544.5 307.7,544.5 307.7,543.5 315.3,543.5 315.3,544.5 323.1,544.5 323.1,545.5 324.8,545.5 324.8,546.5 326.5,546.5 326.5,547.5 329.9,547.5 329.9,548.5 331.6,548.5 331.6,549.5 333.3,549.5 335.0,546.5 336.6,542.5 338.2,542.5 338.2,543.5 339.7,543.5 339.7,544.5 341.3,544.5 341.3,545.5 342.9,545.5 342.9,546.5 344.5,546.5 344.5,547.5 346.0,547.5 346.0,548.5 349.2,548.5 349.2,549.5 350.7,549.5 350.7,550.5 352.3,550.5 352.3,551.5 353.9,551.5 353.9,552.5 355.5,552.5 355.5,553.5 357.0,553.5 357.0,554.5 358.6,554.5 361.2,568.5 362.7,568.5 362.7,567.5 364.3,567.5 364.3,566.5 365.8,566.5 365.8,565.5 367.3,565.5 367.3,564.5 370.4,564.5 370.4,563.5 371.9,563.5 371.9,562.5 379.4,562.5 379.4,563.5 388.5,563.5 388.5,564.5 391.5,564.5 391.5,562.5 393.0,562.5 393.0,561.5 394.5,561.5 394.5,560.5 396.0,560.5 396.0,558.5 397.6,558.5 397.6,559.5 399.1,559.5 399.1,560.5 400.7,560.5 400.7,561.5 402.3,561.5 402.3,562.5 403.9,562.5 403.9,563.5 407.0,563.5 407.0,564.5 408.6,564.5 408.6,565.5 410.6,570.5 412.4,570.5 412.4,568.5 414.1,568.5 414.1,567.5 415.9,567.5 415.9,566.5 417.9,566.5 417.9,569.5 419.9,569.5 419.9,571.5 421.7,571.5 421.7,573.5 423.5,573.5 423.5,574.5 425.4,574.5 425.4,576.5 427.2,576.5 427.2,577.5 429.2,577.5 429.2,576.5 431.2,576.5 431.2,574.5 432.8,574.5 432.8,575.5 439.3,575.5 439.3,576.5 445.8,576.5 448.5,581.5 453.2,581.5 453.2,580.5 460.9,580.5 460.9,579.5 464.4,579.5 464.4,577.5 466.4,577.5 466.4,576.5 468.1,576.5 468.1,577.5 469.9,577.5 469.9,579.5 471.6,579.5 471.6,580.5 473.4,580.5 473.4,582.5 475.1,582.5 475.1,584.5 476.7,584.5 476.7,583.5 481.3,583.5 481.3,582.5 485.9,582.5 485.9,581.5 490.6,581.5 490.6,580.5 498.4,580.5 498.4,581.5 503.0,581.5 503.0,582.5 508.0,582.5 508.0,583.5 523.3,583.5 523.3,584.5 556.7,584.5 556.7,585.5 562.8,585.5 565.0,582.5 566.6,582.5 566.6,583.5 573.1,583.5 573.1,584.5 581.2,584.5 581.2,585.5 587.5,585.5 587.5,586.5 593.8,586.5 593.8,587.5 619.0,587.5 619.0,586.5 623.9,586.5 623.9,587.5 625.5,587.5 625.5,588.5 635.3,588.5 635.3,587.5 653.9,587.5 653.9,588.5 668.0,588.5 668.0,590.5 669.7,587.5 671.4,587.5 671.4,585.5 673.2,585.5 673.2,584.5 676.7,584.5 678.0,580.5 680.0,580.5 680.0,582.5 682.0,582.5 682.0,584.5 684.6,578.5 687.8,578.5 687.8,579.5 689.4,579.5 689.4,580.5 692.6,580.5 692.6,581.5 694.3,581.5 694.3,582.5 699.2,582.5 699.2,583.5 702.6,583.5 702.6,584.5 705.9,584.5 705.9,585.5 720.5,585.5 720.5,586.5 722.0,586.5 722.0,585.5 723.6,585.5 723.6,584.5 725.1,584.5 725.1,583.5 728.1,583.5 728.1,582.5 729.7,582.5 729.7,581.5 731.2,581.5 731.2,580.5 732.7,580.5 732.7,579.5 734.3,579.5 734.3,578.5 737.3,578.5 737.3,577.5 738.9,577.5 738.9,576.5 740.4,576.5 740.4,575.5 741.9,575.5 741.9,574.5 743.5,574.5 743.5,573.5 745.0,573.5 745.0,572.5 746.6,572.5 746.6,571.5 748.2,571.5 748.2,570.5 749.9,570.5 749.9,569.5 753.1,569.5 753.1,568.5 754.7,568.5 754.7,567.5 756.3,567.5 756.3,566.5 759.6,566.5 759.6,565.5 761.2,565.5 761.2,564.5 762.8,564.5 762.8,563.5" fill="none" stroke="#E24D42" stroke-width="1" stroke-linejoin="round"/>
<polyline points="219.0,533.5 223.8,533.5 223.8,532.5 230.2,532.5 230.2,531.5 235.0,531.5 235.0,530.5 243.2,530.5 243.2,529.5 263.3,529.5 263.3,528.5 266.3,528.5 266.3,527.5 267.9,527.5 267.9,526.5 270.9,526.5 270.9,525.5 274.0,525.5 274.0,524.5 277.0,524.5 277.0,523.5 278.6,523.5 278.6,522.5 284.8,522.5 284.8,523.5 291.1,523.5 291.1,524.5 296.0,524.5 296.0,525.5 301.0,525.5 301.0,526.5 305.7,526.5 305.7,527.5 311.8,527.5 311.8,528.5 316.4,528.5 316.4,529.5 320.9,529.5 320.9,530.5 325.5,530.5 325.5,531.5 330.0,531.5 330.0,532.5 336.2,532.5 336.2,533.5 340.9,533.5 340.9,534.5 345.6,534.5 345.6,535.5 350.3,535.5 350.3,536.5 357.9,536.5 357.9,537.5 366.9,537.5 366.9,538.5 369.9,538.5 371.9,528.5 373.9,519.5 375.7,519.5 375.7,521.5 377.5,521.5 377.5,523.5 379.4,523.5 379.4,526.5 381.2,526.5 381.2,528.5 382.9,528.5 382.9,529.5 384.5,529.5 384.5,531.5 386.1,531.5 386.1,532.5 387.8,532.5 387.8,533.5 390.0,533.5 390.0,534.5 400.0,534.5 400.0,535.5 402.0,535.5 402.0,536.5 423.2,536.5 423.2,538.5 441.2,538.5 441.2,539.5 443.2,539.5 443.2,540.5 501.7,540.5 501.7,541.5 523.6,541.5 523.6,542.5 558.2,542.5 558.2,543.5 560.2,543.5 560.2,544.5 565.0,544.5 565.0,543.5 566.8,543.5 566.8,544.5 603.1,544.5 603.1,545.5 604.9,545.5 604.9,546.5 648.4,546.5 648.4,547.5 688.0,547.5 688.0,549.5 707.9,549.5 707.9,548.5 709.9,548.5 709.9,547.5 713.1,547.5 713.1,546.5 716.4,546.5 716.4,545.5 719.6,545.5 719.6,544.5 722.9,544.5 722.9,543.5 724.5,543.5 724.5,542.5 729.5,542.5 729.5,541.5 732.8,541.5 732.8,540.5 737.8,540.5 737.8,539.5 745.4,539.5 745.4,538.5 754.5,538.5 754.5,537.5 759.0,537.5" fill="none" stroke="#BA43A9" stroke-width="1" stroke-linejoin="round"/>
<polyline points="219.0,558.5 227.3,558.5 227.3,557.5 232.3,557.5 232.3,556.5 252.4,556.5 252.4,555.5 260.2,555.5 262.2,559.5 263.8,559.5 263.8,558.5 265.4,558.5 265.4,557.5 268.5,557.5 268.5,556.5 270.1,556.5 270.1,555.5 271.6,555.5 271.6,554.5 273.2,554.5 273.2,553.5 274.8,553.5 274.8,552.5 279.5,552.5 279.5,551.5 282.6,551.5 282.6,550.5 285.8,550.5 285.8,549.5 290.4,549.5 290.4,548.5 293.6,548.5 293.6,547.5 296.7,547.5 296.7,546.5 301.4,546.5 301.4,545.5 317.6,545.5 317.6,546.5 322.3,546.5 322.3,547.5 325.4,547.5 325.4,548.5 328.6,548.5 328.6,549.5 333.3,549.5 333.3,550.5 335.3,556.5 346.2,556.5 346.2,555.5 358.6,555.5 361.2,545.5 362.7,545.5 362.7,546.5 364.2,546.5 364.2,548.5 365.7,548.5 365.7,549.5 367.2,549.5 367.2,550.5 368.7,550.5 368.7,551.5 370.2,551.5 370.2,553.5 371.7,553.5 371.7,554.5 373.2,554.5 373.2,555.5 374.7,555.5 374.7,556.5 377.8,556.5 377.8,557.5 379.3,557.5 379.3,558.5 382.4,558.5 382.4,559.5 385.4,559.5 385.4,560.5 386.9,560.5 386.9,561.5 390.0,561.5 390.0,562.5 391.8,562.5 391.8,564.5 393.5,564.5 393.5,567.5 395.3,567.5 395.3,569.5 398.0,569.5 398.0,567.5 409.3,567.5 411.3,554.5 412.8,554.5 412.8,556.5 414.3,556.5 414.3,558.5 415.8,558.5 415.8,560.5 417.3,560.5 417.3,562.5 419.2,571.5 420.9,571.5 420.9,572.5 422.6,572.5 422.6,573.5 424.1,573.5 424.1,572.5 425.7,572.5 425.7,571.5 427.2,571.5 427.2,570.5 434.9,570.5 434.9,571.5 441.1,571.5 441.1,572.5 448.8,572.5 448.8,573.5 455.0,573.5 455.0,574.5 459.7,574.5 459.7,575.5 461.2,575.5 461.2,576.5 464.4,576.5 464.4,577.5 465.8,582.5 467.4,582.5 467.4,581.5 472.4,581.5 472.4,580.5 475.1,574.5 476.8,574.5 476.8,575.5 480.1,575.5 480.1,576.5 483.4,576.5 483.4,577.5 486.7,577.5 486.7,578.5 488.4,578.5 490.4,582.5 551.2,582.5 551.2,583.5 554.5,583.5 554.5,584.5 557.8,584.5 557.8,585.5 561.1,585.5 561.1,586.5 568.2,586.5 568.2,585.5 622.2,585.5 622.2,586.5 623.9,586.5 623.9,584.5 625.5,584.5 625.5,583.5 627.0,583.5 627.0,584.5 636.1,584.5 636.1,585.5 642.1,585.5 642.1,586.5 644.1,586.5 644.1,588.5 668.0,588.5 668.0,586.5 670.0,586.5 670.0,584.5 676.7,584.5 676.7,585.5 679.3,585.5 679.3,588.5 682.0,588.5 684.0,584.5 686.0,580.5 687.8,580.5 687.8,581.5 689.5,581.5 689.5,582.5 691.3,582.5 691.3,584.5 702.6,584.5 702.6,585.5 705.9,585.5 705.9,586.5 707.5,586.5 707.5,585.5 720.5,585.5 720.5,584.5 723.6,584.5 723.6,583.5 725.1,583.5 725.1,582.5 726.6,582.5 726.6,581.5 729.7,581.5 729.7,580.5 731.2,580.5 731.2,579.5 732.7,579.5 732.7,578.5 734.3,578.5 734.3,577.5 735.8,577.5 735.8,576.5 737.3,576.5 737.3,575.5 738.9,575.5 738.9,574.5 740.4,574.5 740.4,573.5 741.9,573.5 741.9,572.5 743.5,572.5 743.5,571.5 745.0,571.5 745.0,570.5 748.2,570.5 748.2,569.5 749.9,569.5 749.9,568.5 753.1,568.5 753.1,567.5 756.3,567.5 756.3,566.5 757.9,566.5 757.9,565.5 761.2,565.5 761.2,564.5 762.8,564.5 762.8,563.5" fill="none" stroke="#705DA0" stroke-width="1" stroke-linejoin="round"/>
<polyline points="219.0,576.6 220.5,576.8 222.0,576.2 223.5,575.9 225.0,576.0 226.8,576.4 228.5,576.2 230.2,576.3 232.0,576.2 233.6,576.3 235.2,576.4 236.8,575.9 238.4,576.2 240.0,575.8 241.8,576.2 243.5,576.6 245.2,576.5 247.0,576.8" fill="none" stroke="#1F78C1" stroke-width="1"/>
<polyline points="219.0,575.8 220.5,576.0 222.0,575.4 223.5,575.1 225.0,575.2 226.8,575.6 228.5,575.4 230.2,575.5 232.0,575.4 233.6,575.5 235.2,575.6 236.8,575.1 238.4,575.4 240.0,575.0 241.8,575.4 243.5,575.8 245.2,575.7 247.0,576.0" fill="none" stroke="#508642" stroke-width="1"/>
<line x1="219" y1="622.3" x2="247" y2="622.3" stroke="#6ED0E0" stroke-width="1.3" stroke-opacity="0.85"/>
<line x1="247" y1="622.3" x2="762.3" y2="622.3" stroke="#EAB839" stroke-width="1.6" stroke-opacity="0.55"/>
<g font-family="Liberation Sans, sans-serif" font-size="11.3" fill="#333">
<text x="213.5" y="498.5" text-anchor="end">40 °C</text>
<text x="213.5" y="530.5" text-anchor="end">30 °C</text>
<text x="213.5" y="562" text-anchor="end">20 °C</text>
<text x="213.5" y="594" text-anchor="end">10 °C</text>
<text x="213.5" y="625" text-anchor="end">0 °C</text>
<text x="798" y="498.5" font-size="12.3">5 L/min</text>
<text x="798" y="524.5" font-size="12.3">4 L/min</text>
<text x="798" y="549.5" font-size="12.3">3 L/min</text>
<text x="798" y="574.5" font-size="12.3">2 L/min</text>
<text x="798" y="600.3" font-size="12.3">1 L/min</text>
<text x="798" y="625.5" font-size="12.3">0 L/min</text>
<text x="237.5" y="640.5" text-anchor="middle" font-size="11.5">12:00</text>
<text x="332.5" y="640.5" text-anchor="middle" font-size="11.5">16:00</text>
<text x="426.5" y="640.5" text-anchor="middle" font-size="11.5">20:00</text>
<text x="521.5" y="640.5" text-anchor="middle" font-size="11.5">00:00</text>
<text x="616.5" y="640.5" text-anchor="middle" font-size="11.5">04:00</text>
<text x="710.5" y="640.5" text-anchor="middle" font-size="11.5">08:00</text>
</g>
<g stroke="#dcdedc" stroke-width="1" shape-rendering="crispEdges">
<line x1="901" y1="495.5" x2="1847" y2="495.5"/>
<line x1="901" y1="525.5" x2="1847" y2="525.5"/>
<line x1="901" y1="555.5" x2="1847" y2="555.5"/>
<line x1="901" y1="585.5" x2="1847" y2="585.5"/>
<line x1="901" y1="615.5" x2="1847" y2="615.5"/>
<line x1="901" y1="645.5" x2="1847" y2="645.5"/>
<line x1="901" y1="675.5" x2="1847" y2="675.5"/>
<line x1="931.5" y1="495" x2="931.5" y2="676"/>
<line x1="1010.5" y1="495" x2="1010.5" y2="676"/>
<line x1="1089.5" y1="495" x2="1089.5" y2="676"/>
<line x1="1168.5" y1="495" x2="1168.5" y2="676"/>
<line x1="1247.5" y1="495" x2="1247.5" y2="676"/>
<line x1="1325.5" y1="495" x2="1325.5" y2="676"/>
<line x1="1404.5" y1="495" x2="1404.5" y2="676"/>
<line x1="1483.5" y1="495" x2="1483.5" y2="676"/>
<line x1="1562.5" y1="495" x2="1562.5" y2="676"/>
<line x1="1641.5" y1="495" x2="1641.5" y2="676"/>
<line x1="1720.5" y1="495" x2="1720.5" y2="676"/>
<line x1="1799.5" y1="495" x2="1799.5" y2="676"/>
</g>
<polygon points="901.0,532.5 903.8,532.5 903.8,531.5 906.6,531.5 906.6,530.5 908.0,530.5 908.0,531.5 910.7,531.5 910.7,530.5 912.0,530.5 912.0,532.5 913.2,532.5 913.2,530.5 917.1,530.5 917.1,532.5 918.4,532.5 918.4,531.5 919.7,531.5 919.7,530.5 923.5,530.5 923.5,532.5 926.3,532.5 926.3,531.5 927.8,531.5 927.8,529.5 929.3,529.5 929.3,528.5 930.5,528.5 930.5,529.5 932.9,529.5 932.9,531.5 934.1,531.5 934.1,530.5 935.3,530.5 935.3,529.5 936.5,529.5 936.5,528.5 939.0,528.5 939.0,527.5 941.5,527.5 941.5,525.5 944.3,525.5 944.3,527.5 945.8,527.5 945.8,528.5 948.5,528.5 949.8,525.5 952.2,525.5 952.2,524.5 956.0,524.5 956.0,526.5 959.7,526.5 959.7,527.5 961.0,527.5 961.0,526.5 966.0,526.5 966.0,527.5 969.0,527.5 969.0,528.5 970.8,528.5 970.8,530.5 972.0,527.5 973.2,524.5 974.4,524.5 974.4,522.5 975.8,522.5 975.8,521.5 977.1,521.5 977.1,522.5 978.4,522.5 978.4,523.5 982.2,523.5 982.2,521.5 983.4,521.5 983.4,520.5 985.9,520.5 985.9,518.5 988.3,518.5 988.3,516.5 989.5,516.5 989.5,514.5 992.0,514.5 992.0,513.5 993.2,513.5 993.2,512.5 995.7,512.5 995.7,511.5 998.3,511.5 998.3,510.5 999.5,510.5 999.5,509.5 1000.8,509.5 1000.8,510.5 1002.0,510.5 1002.0,508.5 1004.2,508.5 1004.2,507.5 1006.0,525.5 1007.4,525.5 1008.7,522.5 1010.0,522.5 1010.0,521.5 1011.4,521.5 1011.4,520.5 1014.1,520.5 1014.1,519.5 1015.4,519.5 1015.4,520.5 1016.7,517.5 1018.0,517.5 1018.0,518.5 1021.9,518.5 1021.9,516.5 1023.2,516.5 1023.2,517.5 1025.8,517.5 1025.8,518.5 1027.1,518.5 1027.1,519.5 1029.6,519.5 1029.6,521.5 1030.9,521.5 1030.9,520.5 1032.2,520.5 1032.2,522.5 1033.4,522.5 1033.4,521.5 1034.6,521.5 1034.6,522.5 1037.0,522.5 1037.0,521.5 1038.2,521.5 1038.2,522.5 1039.4,522.5 1040.8,516.5 1041.6,529.5 1043.9,546.5 1045.7,539.5 1046.9,539.5 1046.9,538.5 1048.2,538.5 1048.2,536.5 1049.4,536.5 1049.4,535.5 1050.6,535.5 1050.6,534.5 1051.9,534.5 1051.9,533.5 1053.1,533.5 1053.1,532.5 1054.4,532.5 1054.4,531.5 1055.6,531.5 1055.6,530.5 1056.8,530.5 1056.8,528.5 1058.1,528.5 1058.1,527.5 1059.3,527.5 1059.3,526.5 1062.9,526.5 1062.9,525.5 1067.8,525.5 1067.8,528.5 1069.2,528.5 1069.2,531.5 1070.4,531.5 1070.4,530.5 1071.7,530.5 1071.7,529.5 1074.2,529.5 1074.2,528.5 1076.6,528.5 1076.6,527.5 1079.1,527.5 1079.1,526.5 1083.9,526.5 1083.9,527.5 1093.6,527.5 1093.6,528.5 1097.2,528.5 1099.0,537.5 1101.2,537.5 1101.2,535.5 1102.6,540.5 1104.4,521.5 1106.1,537.5 1107.7,552.5 1109.9,544.5 1111.2,532.5 1112.6,519.5 1113.9,534.5 1115.3,549.5 1118.4,549.5 1118.4,547.5 1119.8,547.5 1119.8,546.5 1121.2,546.5 1121.2,545.5 1122.5,545.5 1122.5,544.5 1123.8,544.5 1123.8,542.5 1125.2,542.5 1125.2,541.5 1126.5,541.5 1126.5,539.5 1127.9,539.5 1127.9,537.5 1129.2,537.5 1129.2,536.5 1130.6,536.5 1130.6,534.5 1133.3,534.5 1133.3,533.5 1134.7,533.5 1134.7,532.5 1137.2,532.5 1137.2,531.5 1149.6,531.5 1150.5,521.5 1152.3,542.5 1153.7,546.5 1155.0,546.5 1155.0,549.5 1156.4,549.5 1156.4,547.5 1158.6,585.5 1160.4,585.5 1161.8,581.5 1163.3,576.5 1164.7,572.5 1166.2,568.5 1167.6,564.5 1168.9,561.5 1170.3,558.5 1171.7,558.5 1171.7,556.5 1173.0,553.5 1174.3,553.5 1174.3,551.5 1175.7,548.5 1177.1,548.5 1177.1,546.5 1178.4,546.5 1178.4,544.5 1180.8,544.5 1180.8,543.5 1182.1,543.5 1182.1,542.5 1184.5,542.5 1184.5,541.5 1185.7,541.5 1185.7,540.5 1188.4,540.5 1188.4,539.5 1191.1,539.5 1191.1,538.5 1193.8,538.5 1193.8,537.5 1237.4,537.5 1237.4,538.5 1239.8,538.5 1239.8,539.5 1241.0,539.5 1241.0,540.5 1243.4,540.5 1243.4,541.5 1244.8,541.5 1244.8,540.5 1248.8,540.5 1248.8,539.5 1255.1,539.5 1255.1,540.5 1287.7,540.5 1287.7,541.5 1291.8,541.5 1291.8,542.5 1299.7,542.5 1299.7,541.5 1303.6,541.5 1303.6,540.5 1306.2,540.5 1306.2,541.5 1307.6,541.5 1307.6,542.5 1310.3,542.5 1310.3,543.5 1332.3,543.5 1332.3,542.5 1333.7,542.5 1333.7,540.5 1335.0,540.5 1335.0,541.5 1338.9,541.5 1338.9,542.5 1341.5,542.5 1341.5,543.5 1362.3,543.5 1362.3,546.5 1363.5,543.5 1379.8,543.5 1381.6,549.5 1382.9,549.5 1382.9,547.5 1384.3,547.5 1384.3,545.5 1386.1,545.5 1386.1,546.5 1426.7,546.5 1426.7,549.5 1430.4,549.5 1430.4,548.5 1442.6,548.5 1442.6,547.5 1443.8,547.5 1445.3,552.5 1446.6,549.5 1474.3,549.5 1474.3,550.5 1482.7,550.5 1484.5,558.5 1486.3,555.5 1488.1,551.5 1491.1,551.5 1491.1,550.5 1492.6,550.5 1492.6,549.5 1505.1,549.5 1505.1,550.5 1511.8,550.5 1511.8,551.5 1514.7,551.5 1514.7,552.5 1552.2,552.5 1552.2,553.5 1564.3,553.5 1564.3,554.5 1567.1,554.5 1567.1,555.5 1583.8,555.5 1583.8,558.5 1584.7,555.5 1630.7,555.5 1632.5,563.5 1633.8,560.5 1635.2,560.5 1635.2,558.5 1663.2,558.5 1665.6,564.5 1667.1,561.5 1668.6,561.5 1668.6,559.5 1674.9,559.5 1674.9,561.5 1676.3,561.5 1676.3,560.5 1677.7,560.5 1677.7,559.5 1680.4,559.5 1680.4,558.5 1682.2,558.5 1682.2,560.5 1684.0,560.5 1684.0,561.5 1701.5,561.5 1701.5,562.5 1705.2,562.5 1705.2,563.5 1706.6,563.5 1706.6,564.5 1707.9,564.5 1707.9,563.5 1709.3,563.5 1709.3,562.5 1711.9,562.5 1711.9,561.5 1719.6,561.5 1719.6,560.5 1723.7,560.5 1723.7,559.5 1726.4,559.5 1726.4,558.5 1730.3,558.5 1730.3,557.5 1733.9,557.5 1733.9,556.5 1738.7,556.5 1738.7,555.5 1739.9,555.5 1740.8,559.5 1741.7,552.5 1753.5,552.5 1754.4,549.5 1763.4,549.5 1763.4,550.5 1764.9,550.5 1764.9,548.5 1766.4,548.5 1766.4,547.5 1767.9,547.5 1767.9,546.5 1798.6,546.5 1799.8,543.5 1799.8,676 901.0,676" fill="#7EB26D" fill-opacity="0.1"/>
<polygon points="901.0,588.5 904.3,588.5 904.3,586.5 913.8,586.5 913.8,585.5 924.8,585.5 924.8,583.5 931.2,583.5 931.2,582.5 950.2,582.5 950.2,580.5 956.4,580.5 956.4,579.5 972.6,579.5 972.6,576.5 974.4,576.5 974.4,573.5 978.0,573.5 978.0,571.5 979.8,571.5 979.8,570.5 1006.0,570.5 1006.0,567.5 1021.3,567.5 1021.3,565.5 1023.1,565.5 1023.1,564.5 1025.0,564.5 1025.0,562.5 1026.8,562.5 1026.8,561.5 1031.3,561.5 1031.3,559.5 1034.3,559.5 1034.3,558.5 1050.4,558.5 1050.4,556.5 1053.8,556.5 1053.8,555.5 1055.6,555.5 1055.6,556.5 1059.3,556.5 1059.3,558.5 1073.7,558.5 1073.7,562.5 1079.1,562.5 1079.1,564.5 1082.7,564.5 1082.7,565.5 1086.3,565.5 1086.3,567.5 1092.7,567.5 1095.4,555.5 1102.6,555.5 1102.6,558.5 1104.4,558.5 1104.4,559.5 1106.3,559.5 1106.3,561.5 1108.1,561.5 1108.1,562.5 1109.9,562.5 1109.9,564.5 1111.7,564.5 1111.7,565.5 1113.5,565.5 1113.5,567.5 1117.1,567.5 1117.1,568.5 1118.9,568.5 1118.9,570.5 1120.7,570.5 1120.7,571.5 1122.5,571.5 1122.5,573.5 1125.6,573.5 1125.6,574.5 1128.7,574.5 1128.7,576.5 1131.8,576.5 1131.8,577.5 1136.0,577.5 1136.0,579.5 1137.8,603.5 1142.3,603.5 1142.3,601.5 1144.2,601.5 1144.2,600.5 1146.0,600.5 1146.0,597.5 1147.8,597.5 1147.8,595.5 1149.4,595.5 1149.4,594.5 1152.7,594.5 1152.7,592.5 1155.9,592.5 1155.9,591.5 1159.2,591.5 1159.2,592.5 1169.4,592.5 1169.4,594.5 1189.3,594.5 1189.3,597.5 1192.9,597.5 1194.7,591.5 1196.5,585.5 1200.1,585.5 1200.1,586.5 1201.9,586.5 1201.9,588.5 1203.7,588.5 1203.7,589.5 1205.5,589.5 1205.5,591.5 1207.1,591.5 1207.1,592.5 1210.3,592.5 1210.3,594.5 1213.4,594.5 1213.4,595.5 1215.0,595.5 1215.0,597.5 1218.2,597.5 1218.2,598.5 1220.0,607.5 1221.8,607.5 1221.8,606.5 1223.6,606.5 1223.6,604.5 1225.4,604.5 1225.4,603.5 1227.2,603.5 1227.2,601.5 1230.8,601.5 1232.6,607.5 1234.4,607.5 1234.4,609.5 1238.0,609.5 1239.8,613.5 1241.6,618.5 1243.4,618.5 1243.4,619.5 1245.2,619.5 1245.2,621.5 1247.0,621.5 1247.0,622.5 1248.6,622.5 1248.6,619.5 1250.2,619.5 1250.2,618.5 1251.8,618.5 1251.8,616.5 1253.4,616.5 1253.4,615.5 1255.2,615.5 1255.2,618.5 1257.0,618.5 1257.0,621.5 1260.0,621.5 1260.0,619.5 1261.5,619.5 1261.5,618.5 1266.4,618.5 1266.4,619.5 1279.5,619.5 1279.5,624.5 1281.3,624.5 1281.3,627.5 1284.5,627.5 1284.5,625.5 1287.7,625.5 1287.7,624.5 1304.0,624.5 1304.0,625.5 1309.4,625.5 1309.4,624.5 1310.9,624.5 1310.9,622.5 1312.4,622.5 1312.4,621.5 1313.9,621.5 1313.9,618.5 1315.6,618.5 1315.6,619.5 1322.2,619.5 1322.2,621.5 1325.3,621.5 1325.3,625.5 1326.8,625.5 1326.8,630.5 1328.3,630.5 1328.3,634.5 1330.1,634.5 1330.1,633.5 1331.9,633.5 1331.9,630.5 1348.2,630.5 1348.2,631.5 1349.7,631.5 1349.7,630.5 1351.2,630.5 1351.2,628.5 1352.7,628.5 1352.7,627.5 1356.3,627.5 1356.3,625.5 1358.1,625.5 1358.1,624.5 1359.6,624.5 1359.6,625.5 1361.1,625.5 1361.1,627.5 1375.3,627.5 1375.3,630.5 1387.0,630.5 1387.0,633.5 1423.2,633.5 1423.2,634.5 1451.1,634.5 1451.1,636.5 1472.7,636.5 1472.7,634.5 1474.5,634.5 1474.5,633.5 1476.3,633.5 1476.3,630.5 1478.1,630.5 1478.1,631.5 1480.0,631.5 1480.0,633.5 1501.7,633.5 1501.7,636.5 1524.0,636.5 1524.0,637.5 1527.1,637.5 1527.1,639.5 1578.4,639.5 1578.4,642.5 1581.1,642.5 1581.1,639.5 1629.8,639.5 1629.8,640.5 1631.6,640.5 1631.6,642.5 1648.8,642.5 1648.8,645.5 1651.5,645.5 1651.5,643.5 1654.2,633.5 1663.2,633.5 1665.0,628.5 1671.0,628.5 1671.0,630.5 1672.5,630.5 1672.5,631.5 1674.0,631.5 1674.0,633.5 1676.4,622.5 1677.7,622.5 1677.7,624.5 1679.3,624.5 1679.3,625.5 1682.4,625.5 1682.4,627.5 1689.4,627.5 1689.4,628.5 1693.0,628.5 1693.0,630.5 1699.1,630.5 1699.1,631.5 1703.9,631.5 1703.9,633.5 1709.3,633.5 1709.3,634.5 1713.8,634.5 1713.8,636.5 1739.9,636.5 1739.9,634.5 1741.7,634.5 1741.7,633.5 1745.4,633.5 1745.4,631.5 1747.2,631.5 1747.2,630.5 1750.8,630.5 1750.8,628.5 1754.4,628.5 1754.4,627.5 1757.4,627.5 1757.4,625.5 1758.9,625.5 1758.9,624.5 1761.9,624.5 1761.9,622.5 1764.9,622.5 1764.9,621.5 1766.4,621.5 1766.4,619.5 1767.9,619.5 1767.9,618.5 1769.4,618.5 1769.4,616.5 1772.4,616.5 1772.4,615.5 1773.9,615.5 1773.9,613.5 1775.5,613.5 1775.5,612.5 1778.6,612.5 1778.6,610.5 1780.1,610.5 1780.1,609.5 1783.2,609.5 1783.2,607.5 1784.7,607.5 1784.7,606.5 1787.7,606.5 1787.7,604.5 1790.7,604.5 1790.7,603.5 1792.2,603.5 1792.2,601.5 1796.8,601.5 1796.8,600.5 1799.8,600.5 1799.8,598.5 1803.1,598.5 1803.1,597.5 1806.7,597.5 1806.7,676 901.0,676" fill="#EAB839" fill-opacity="0.1"/>
<polygon points="901.0,621.8 903.0,620.6 905.0,620.5 906.6,620.4 908.2,619.5 909.8,619.6 911.4,618.7 913.0,618.5 914.7,618.0 916.3,618.0 918.0,617.7 919.7,618.5 921.3,618.0 923.0,617.8 924.8,617.9 926.5,618.3 928.2,618.6 930.0,619.0 931.6,618.6 933.2,619.8 934.9,619.5 936.5,619.6 938.0,620.3 939.6,619.9 941.1,620.3 942.7,620.0 944.2,620.0 945.8,621.2 947.3,620.9 947.3,676 901.0,676" fill="#6ED0E0" fill-opacity="0.1"/>
<polyline points="901.0,532.5 903.8,532.5 903.8,531.5 906.6,531.5 906.6,530.5 908.0,530.5 908.0,531.5 910.7,531.5 910.7,530.5 912.0,530.5 912.0,532.5 913.2,532.5 913.2,530.5 917.1,530.5 917.1,532.5 918.4,532.5 918.4,531.5 919.7,531.5 919.7,530.5 923.5,530.5 923.5,532.5 926.3,532.5 926.3,531.5 927.8,531.5 927.8,529.5 929.3,529.5 929.3,528.5 930.5,528.5 930.5,529.5 932.9,529.5 932.9,531.5 934.1,531.5 934.1,530.5 935.3,530.5 935.3,529.5 936.5,529.5 936.5,528.5 939.0,528.5 939.0,527.5 941.5,527.5 941.5,525.5 944.3,525.5 944.3,527.5 945.8,527.5 945.8,528.5 948.5,528.5 949.8,525.5 952.2,525.5 952.2,524.5 956.0,524.5 956.0,526.5 959.7,526.5 959.7,527.5 961.0,527.5 961.0,526.5 966.0,526.5 966.0,527.5 969.0,527.5 969.0,528.5 970.8,528.5 970.8,530.5 972.0,527.5 973.2,524.5 974.4,524.5 974.4,522.5 975.8,522.5 975.8,521.5 977.1,521.5 977.1,522.5 978.4,522.5 978.4,523.5 982.2,523.5 982.2,521.5 983.4,521.5 983.4,520.5 985.9,520.5 985.9,518.5 988.3,518.5 988.3,516.5 989.5,516.5 989.5,514.5 992.0,514.5 992.0,513.5 993.2,513.5 993.2,512.5 995.7,512.5 995.7,511.5 998.3,511.5 998.3,510.5 999.5,510.5 999.5,509.5 1000.8,509.5 1000.8,510.5 1002.0,510.5 1002.0,508.5 1004.2,508.5 1004.2,507.5 1006.0,525.5 1007.4,525.5 1008.7,522.5 1010.0,522.5 1010.0,521.5 1011.4,521.5 1011.4,520.5 1014.1,520.5 1014.1,519.5 1015.4,519.5 1015.4,520.5 1016.7,517.5 1018.0,517.5 1018.0,518.5 1021.9,518.5 1021.9,516.5 1023.2,516.5 1023.2,517.5 1025.8,517.5 1025.8,518.5 1027.1,518.5 1027.1,519.5 1029.6,519.5 1029.6,521.5 1030.9,521.5 1030.9,520.5 1032.2,520.5 1032.2,522.5 1033.4,522.5 1033.4,521.5 1034.6,521.5 1034.6,522.5 1037.0,522.5 1037.0,521.5 1038.2,521.5 1038.2,522.5 1039.4,522.5 1040.8,516.5 1041.6,529.5 1043.9,546.5 1045.7,539.5 1046.9,539.5 1046.9,538.5 1048.2,538.5 1048.2,536.5 1049.4,536.5 1049.4,535.5 1050.6,535.5 1050.6,534.5 1051.9,534.5 1051.9,533.5 1053.1,533.5 1053.1,532.5 1054.4,532.5 1054.4,531.5 1055.6,531.5 1055.6,530.5 1056.8,530.5 1056.8,528.5 1058.1,528.5 1058.1,527.5 1059.3,527.5 1059.3,526.5 1062.9,526.5 1062.9,525.5 1067.8,525.5 1067.8,528.5 1069.2,528.5 1069.2,531.5 1070.4,531.5 1070.4,530.5 1071.7,530.5 1071.7,529.5 1074.2,529.5 1074.2,528.5 1076.6,528.5 1076.6,527.5 1079.1,527.5 1079.1,526.5 1083.9,526.5 1083.9,527.5 1093.6,527.5 1093.6,528.5 1097.2,528.5 1099.0,537.5 1101.2,537.5 1101.2,535.5 1102.6,540.5 1104.4,521.5 1106.1,537.5 1107.7,552.5 1109.9,544.5 1111.2,532.5 1112.6,519.5 1113.9,534.5 1115.3,549.5 1118.4,549.5 1118.4,547.5 1119.8,547.5 1119.8,546.5 1121.2,546.5 1121.2,545.5 1122.5,545.5 1122.5,544.5 1123.8,544.5 1123.8,542.5 1125.2,542.5 1125.2,541.5 1126.5,541.5 1126.5,539.5 1127.9,539.5 1127.9,537.5 1129.2,537.5 1129.2,536.5 1130.6,536.5 1130.6,534.5 1133.3,534.5 1133.3,533.5 1134.7,533.5 1134.7,532.5 1137.2,532.5 1137.2,531.5 1149.6,531.5 1150.5,521.5 1152.3,542.5 1153.7,546.5 1155.0,546.5 1155.0,549.5 1156.4,549.5 1156.4,547.5 1158.6,585.5 1160.4,585.5 1161.8,581.5 1163.3,576.5 1164.7,572.5 1166.2,568.5 1167.6,564.5 1168.9,561.5 1170.3,558.5 1171.7,558.5 1171.7,556.5 1173.0,553.5 1174.3,553.5 1174.3,551.5 1175.7,548.5 1177.1,548.5 1177.1,546.5 1178.4,546.5 1178.4,544.5 1180.8,544.5 1180.8,543.5 1182.1,543.5 1182.1,542.5 1184.5,542.5 1184.5,541.5 1185.7,541.5 1185.7,540.5 1188.4,540.5 1188.4,539.5 1191.1,539.5 1191.1,538.5 1193.8,538.5 1193.8,537.5 1237.4,537.5 1237.4,538.5 1239.8,538.5 1239.8,539.5 1241.0,539.5 1241.0,540.5 1243.4,540.5 1243.4,541.5 1244.8,541.5 1244.8,540.5 1248.8,540.5 1248.8,539.5 1255.1,539.5 1255.1,540.5 1287.7,540.5 1287.7,541.5 1291.8,541.5 1291.8,542.5 1299.7,542.5 1299.7,541.5 1303.6,541.5 1303.6,540.5 1306.2,540.5 1306.2,541.5 1307.6,541.5 1307.6,542.5 1310.3,542.5 1310.3,543.5 1332.3,543.5 1332.3,542.5 1333.7,542.5 1333.7,540.5 1335.0,540.5 1335.0,541.5 1338.9,541.5 1338.9,542.5 1341.5,542.5 1341.5,543.5 1362.3,543.5 1362.3,546.5 1363.5,543.5 1379.8,543.5 1381.6,549.5 1382.9,549.5 1382.9,547.5 1384.3,547.5 1384.3,545.5 1386.1,545.5 1386.1,546.5 1426.7,546.5 1426.7,549.5 1430.4,549.5 1430.4,548.5 1442.6,548.5 1442.6,547.5 1443.8,547.5 1445.3,552.5 1446.6,549.5 1474.3,549.5 1474.3,550.5 1482.7,550.5 1484.5,558.5 1486.3,555.5 1488.1,551.5 1491.1,551.5 1491.1,550.5 1492.6,550.5 1492.6,549.5 1505.1,549.5 1505.1,550.5 1511.8,550.5 1511.8,551.5 1514.7,551.5 1514.7,552.5 1552.2,552.5 1552.2,553.5 1564.3,553.5 1564.3,554.5 1567.1,554.5 1567.1,555.5 1583.8,555.5 1583.8,558.5 1584.7,555.5 1630.7,555.5 1632.5,563.5 1633.8,560.5 1635.2,560.5 1635.2,558.5 1663.2,558.5 1665.6,564.5 1667.1,561.5 1668.6,561.5 1668.6,559.5 1674.9,559.5 1674.9,561.5 1676.3,561.5 1676.3,560.5 1677.7,560.5 1677.7,559.5 1680.4,559.5 1680.4,558.5 1682.2,558.5 1682.2,560.5 1684.0,560.5 1684.0,561.5 1701.5,561.5 1701.5,562.5 1705.2,562.5 1705.2,563.5 1706.6,563.5 1706.6,564.5 1707.9,564.5 1707.9,563.5 1709.3,563.5 1709.3,562.5 1711.9,562.5 1711.9,561.5 1719.6,561.5 1719.6,560.5 1723.7,560.5 1723.7,559.5 1726.4,559.5 1726.4,558.5 1730.3,558.5 1730.3,557.5 1733.9,557.5 1733.9,556.5 1738.7,556.5 1738.7,555.5 1739.9,555.5 1740.8,559.5 1741.7,552.5 1753.5,552.5 1754.4,549.5 1763.4,549.5 1763.4,550.5 1764.9,550.5 1764.9,548.5 1766.4,548.5 1766.4,547.5 1767.9,547.5 1767.9,546.5 1798.6,546.5 1799.8,543.5" fill="none" stroke="#7EB26D" stroke-width="1" stroke-linejoin="round"/>
<polyline points="901.0,588.5 904.3,588.5 904.3,586.5 913.8,586.5 913.8,585.5 924.8,585.5 924.8,583.5 931.2,583.5 931.2,582.5 950.2,582.5 950.2,580.5 956.4,580.5 956.4,579.5 972.6,579.5 972.6,576.5 974.4,576.5 974.4,573.5 978.0,573.5 978.0,571.5 979.8,571.5 979.8,570.5 1006.0,570.5 1006.0,567.5 1021.3,567.5 1021.3,565.5 1023.1,565.5 1023.1,564.5 1025.0,564.5 1025.0,562.5 1026.8,562.5 1026.8,561.5 1031.3,561.5 1031.3,559.5 1034.3,559.5 1034.3,558.5 1050.4,558.5 1050.4,556.5 1053.8,556.5 1053.8,555.5 1055.6,555.5 1055.6,556.5 1059.3,556.5 1059.3,558.5 1073.7,558.5 1073.7,562.5 1079.1,562.5 1079.1,564.5 1082.7,564.5 1082.7,565.5 1086.3,565.5 1086.3,567.5 1092.7,567.5 1095.4,555.5 1102.6,555.5 1102.6,558.5 1104.4,558.5 1104.4,559.5 1106.3,559.5 1106.3,561.5 1108.1,561.5 1108.1,562.5 1109.9,562.5 1109.9,564.5 1111.7,564.5 1111.7,565.5 1113.5,565.5 1113.5,567.5 1117.1,567.5 1117.1,568.5 1118.9,568.5 1118.9,570.5 1120.7,570.5 1120.7,571.5 1122.5,571.5 1122.5,573.5 1125.6,573.5 1125.6,574.5 1128.7,574.5 1128.7,576.5 1131.8,576.5 1131.8,577.5 1136.0,577.5 1136.0,579.5 1137.8,603.5 1142.3,603.5 1142.3,601.5 1144.2,601.5 1144.2,600.5 1146.0,600.5 1146.0,597.5 1147.8,597.5 1147.8,595.5 1149.4,595.5 1149.4,594.5 1152.7,594.5 1152.7,592.5 1155.9,592.5 1155.9,591.5 1159.2,591.5 1159.2,592.5 1169.4,592.5 1169.4,594.5 1189.3,594.5 1189.3,597.5 1192.9,597.5 1194.7,591.5 1196.5,585.5 1200.1,585.5 1200.1,586.5 1201.9,586.5 1201.9,588.5 1203.7,588.5 1203.7,589.5 1205.5,589.5 1205.5,591.5 1207.1,591.5 1207.1,592.5 1210.3,592.5 1210.3,594.5 1213.4,594.5 1213.4,595.5 1215.0,595.5 1215.0,597.5 1218.2,597.5 1218.2,598.5 1220.0,607.5 1221.8,607.5 1221.8,606.5 1223.6,606.5 1223.6,604.5 1225.4,604.5 1225.4,603.5 1227.2,603.5 1227.2,601.5 1230.8,601.5 1232.6,607.5 1234.4,607.5 1234.4,609.5 1238.0,609.5 1239.8,613.5 1241.6,618.5 1243.4,618.5 1243.4,619.5 1245.2,619.5 1245.2,621.5 1247.0,621.5 1247.0,622.5 1248.6,622.5 1248.6,619.5 1250.2,619.5 1250.2,618.5 1251.8,618.5 1251.8,616.5 1253.4,616.5 1253.4,615.5 1255.2,615.5 1255.2,618.5 1257.0,618.5 1257.0,621.5 1260.0,621.5 1260.0,619.5 1261.5,619.5 1261.5,618.5 1266.4,618.5 1266.4,619.5 1279.5,619.5 1279.5,624.5 1281.3,624.5 1281.3,627.5 1284.5,627.5 1284.5,625.5 1287.7,625.5 1287.7,624.5 1304.0,624.5 1304.0,625.5 1309.4,625.5 1309.4,624.5 1310.9,624.5 1310.9,622.5 1312.4,622.5 1312.4,621.5 1313.9,621.5 1313.9,618.5 1315.6,618.5 1315.6,619.5 1322.2,619.5 1322.2,621.5 1325.3,621.5 1325.3,625.5 1326.8,625.5 1326.8,630.5 1328.3,630.5 1328.3,634.5 1330.1,634.5 1330.1,633.5 1331.9,633.5 1331.9,630.5 1348.2,630.5 1348.2,631.5 1349.7,631.5 1349.7,630.5 1351.2,630.5 1351.2,628.5 1352.7,628.5 1352.7,627.5 1356.3,627.5 1356.3,625.5 1358.1,625.5 1358.1,624.5 1359.6,624.5 1359.6,625.5 1361.1,625.5 1361.1,627.5 1375.3,627.5 1375.3,630.5 1387.0,630.5 1387.0,633.5 1423.2,633.5 1423.2,634.5 1451.1,634.5 1451.1,636.5 1472.7,636.5 1472.7,634.5 1474.5,634.5 1474.5,633.5 1476.3,633.5 1476.3,630.5 1478.1,630.5 1478.1,631.5 1480.0,631.5 1480.0,633.5 1501.7,633.5 1501.7,636.5 1524.0,636.5 1524.0,637.5 1527.1,637.5 1527.1,639.5 1578.4,639.5 1578.4,642.5 1581.1,642.5 1581.1,639.5 1629.8,639.5 1629.8,640.5 1631.6,640.5 1631.6,642.5 1648.8,642.5 1648.8,645.5 1651.5,645.5 1651.5,643.5 1654.2,633.5 1663.2,633.5 1665.0,628.5 1671.0,628.5 1671.0,630.5 1672.5,630.5 1672.5,631.5 1674.0,631.5 1674.0,633.5 1676.4,622.5 1677.7,622.5 1677.7,624.5 1679.3,624.5 1679.3,625.5 1682.4,625.5 1682.4,627.5 1689.4,627.5 1689.4,628.5 1693.0,628.5 1693.0,630.5 1699.1,630.5 1699.1,631.5 1703.9,631.5 1703.9,633.5 1709.3,633.5 1709.3,634.5 1713.8,634.5 1713.8,636.5 1739.9,636.5 1739.9,634.5 1741.7,634.5 1741.7,633.5 1745.4,633.5 1745.4,631.5 1747.2,631.5 1747.2,630.5 1750.8,630.5 1750.8,628.5 1754.4,628.5 1754.4,627.5 1757.4,627.5 1757.4,625.5 1758.9,625.5 1758.9,624.5 1761.9,624.5 1761.9,622.5 1764.9,622.5 1764.9,621.5 1766.4,621.5 1766.4,619.5 1767.9,619.5 1767.9,618.5 1769.4,618.5 1769.4,616.5 1772.4,616.5 1772.4,615.5 1773.9,615.5 1773.9,613.5 1775.5,613.5 1775.5,612.5 1778.6,612.5 1778.6,610.5 1780.1,610.5 1780.1,609.5 1783.2,609.5 1783.2,607.5 1784.7,607.5 1784.7,606.5 1787.7,606.5 1787.7,604.5 1790.7,604.5 1790.7,603.5 1792.2,603.5 1792.2,601.5 1796.8,601.5 1796.8,600.5 1799.8,600.5 1799.8,598.5 1803.1,598.5 1803.1,597.5 1806.7,597.5" fill="none" stroke="#EAB839" stroke-width="1" stroke-linejoin="round"/>
<polyline points="901.0,621.8 903.0,620.6 905.0,620.5 906.6,620.4 908.2,619.5 909.8,619.6 911.4,618.7 913.0,618.5 914.7,618.0 916.3,618.0 918.0,617.7 919.7,618.5 921.3,618.0 923.0,617.8 924.8,617.9 926.5,618.3 928.2,618.6 930.0,619.0 931.6,618.6 933.2,619.8 934.9,619.5 936.5,619.6 938.0,620.3 939.6,619.9 941.1,620.3 942.7,620.0 944.2,620.0 945.8,621.2 947.3,620.9" fill="none" stroke="#6ED0E0" stroke-width="1" stroke-linejoin="round"/>
<g font-family="Liberation Sans, sans-serif" font-size="11.3" fill="#333">
<text x="895.3" y="498.5" text-anchor="end">35 °C</text>
<text x="895.3" y="528.5" text-anchor="end">30 °C</text>
<text x="895.3" y="558.5" text-anchor="end">25 °C</text>
<text x="895.3" y="588.5" text-anchor="end">20 °C</text>
<text x="895.3" y="619" text-anchor="end">15 °C</text>
<text x="895.3" y="649" text-anchor="end">10 °C</text>
<text x="895.3" y="679" text-anchor="end">5 °C</text>
<text x="931.5" y="694.3" text-anchor="middle" font-size="11.5">12:00</text>
<text x="1010.5" y="694.3" text-anchor="middle" font-size="11.5">14:00</text>
<text x="1089.5" y="694.3" text-anchor="middle" font-size="11.5">16:00</text>
<text x="1168.5" y="694.3" text-anchor="middle" font-size="11.5">18:00</text>
<text x="1247.5" y="694.3" text-anchor="middle" font-size="11.5">20:00</text>
<text x="1325.5" y="694.3" text-anchor="middle" font-size="11.5">22:00</text>
<text x="1404.5" y="694.3" text-anchor="middle" font-size="11.5">00:00</text>
<text x="1483.5" y="694.3" text-anchor="middle" font-size="11.5">02:00</text>
<text x="1562.5" y="694.3" text-anchor="middle" font-size="11.5">04:00</text>
<text x="1641.5" y="694.3" text-anchor="middle" font-size="11.5">06:00</text>
<text x="1720.5" y="694.3" text-anchor="middle" font-size="11.5">08:00</text>
<text x="1799.5" y="694.3" text-anchor="middle" font-size="11.5">10:00</text>
</g>
</svg>
</body></html>
